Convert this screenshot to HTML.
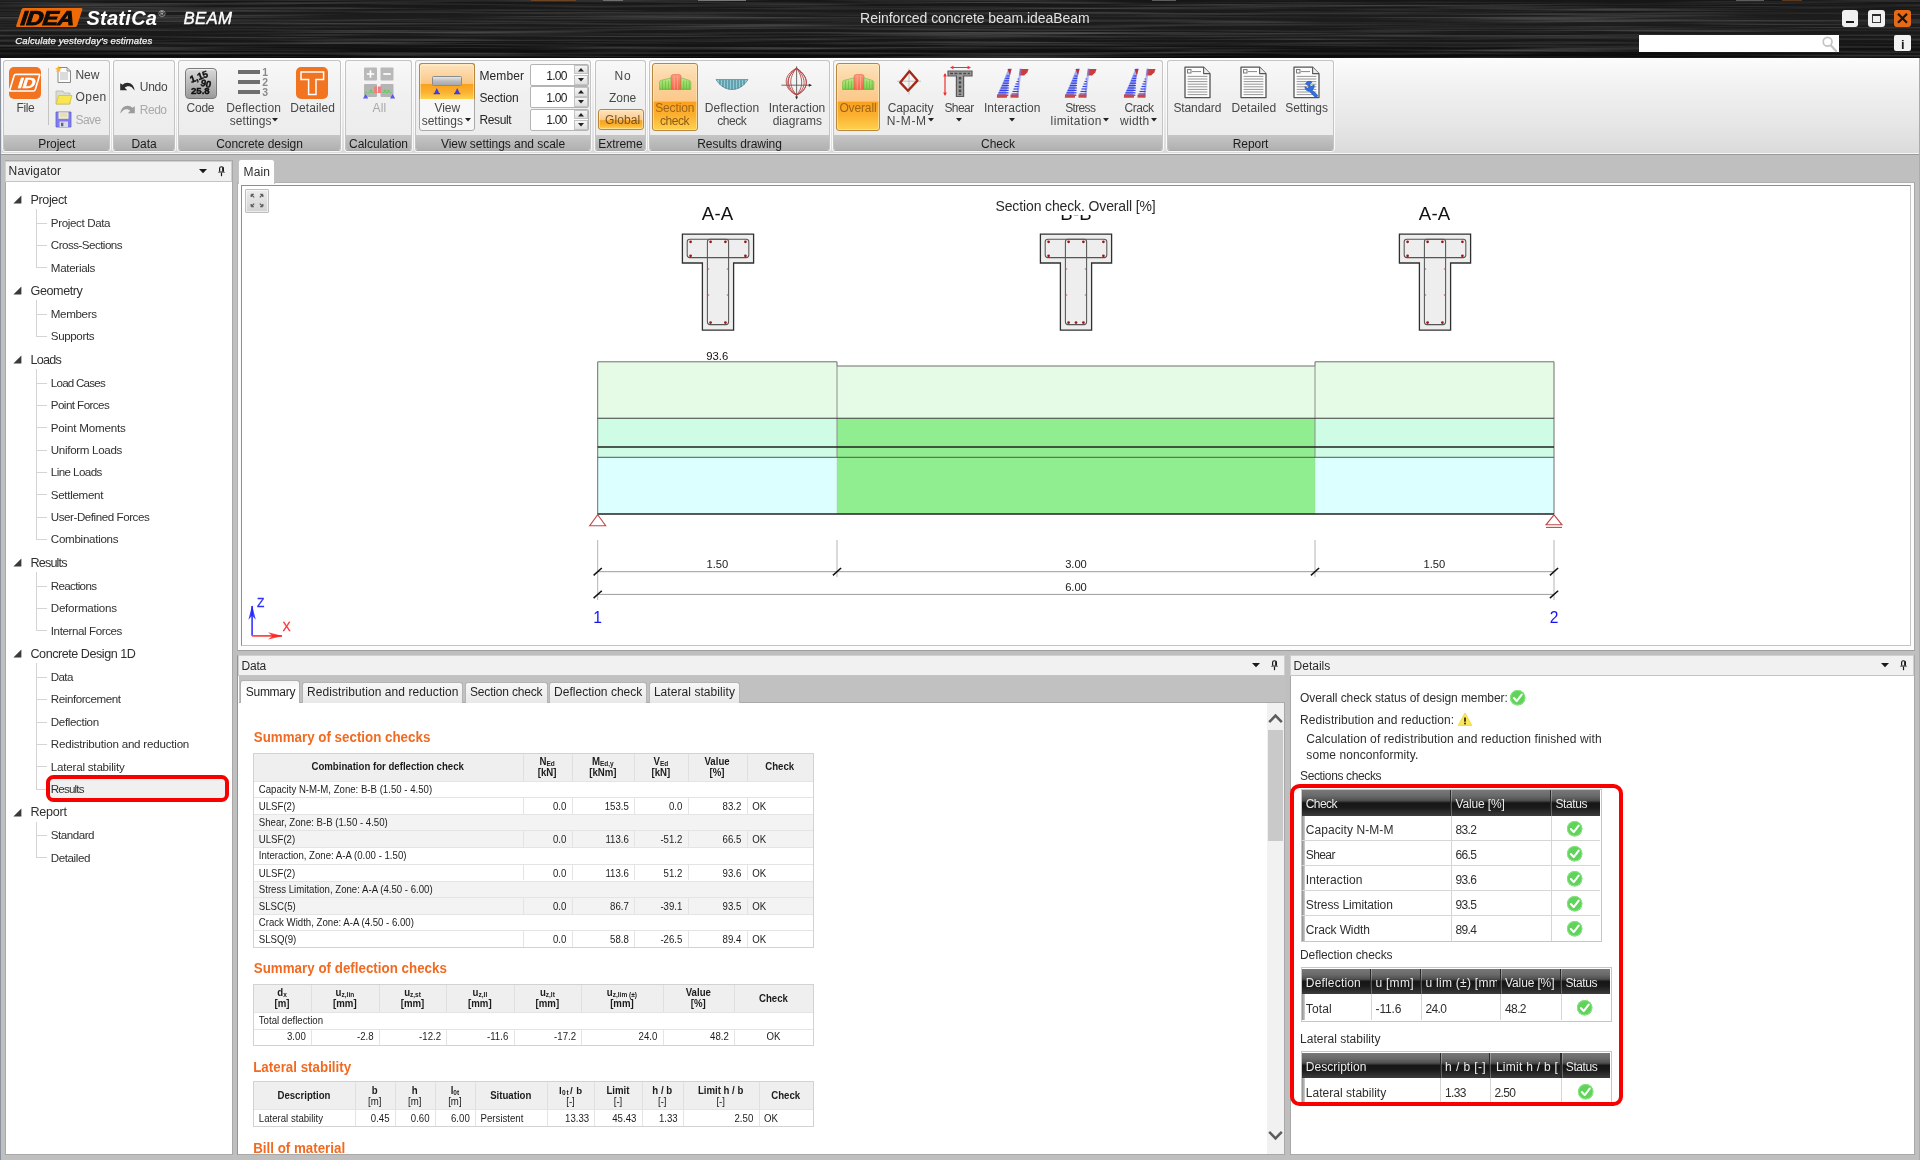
<!DOCTYPE html>
<html lang="en"><head><meta charset="utf-8"><title>IDEA StatiCa BEAM - Reinforced concrete beam.ideaBeam</title>
<style>
html,body{margin:0;padding:0;}
body{width:1920px;height:1160px;overflow:hidden;background:#bfbfbf;font-family:"Liberation Sans",sans-serif;}
#app{position:relative;width:1920px;height:1160px;overflow:hidden;will-change:transform;}
.b{position:absolute;box-sizing:border-box;}
.t{position:absolute;white-space:nowrap;font-family:"Liberation Sans",sans-serif;}
.titlebar{background:#121212;}
.streaks{background:
 repeating-linear-gradient(180deg, rgba(255,255,255,0) 0px, rgba(255,255,255,.07) 1px, rgba(255,255,255,0) 2px, rgba(0,0,0,.25) 3.5px, rgba(255,255,255,0) 5px),
 repeating-linear-gradient(180deg, rgba(255,255,255,0) 0px, rgba(255,255,255,.06) 3px, rgba(0,0,0,.3) 7px, rgba(255,255,255,.05) 9px, rgba(255,255,255,0) 11px),
 linear-gradient(180deg,#202020,#1a1a1a 50%,#101010);}
.ribbon{background:linear-gradient(180deg,#fcfcfc 0%,#f1f1f1 30%,#e6e6e6 70%,#dadada 100%);}
.grp{border:1px solid #c4c4c4;border-bottom-color:#a8a8a8;border-radius:3px;background:linear-gradient(180deg,#f8f8f8 0%,#f0f0f0 40%,#ebebeb 100%);box-shadow:0 0 0 1px rgba(255,255,255,.8);}
.grplab{background:linear-gradient(180deg,#c6c6c6,#b0b0b0);border-radius:0 0 2px 2px;}

</style></head>
<body>
<div id="app">
<div class="b titlebar" style="left:0px;top:0px;width:1920px;height:58px;"></div>
<svg class="b" style="left:0;top:0" width="1920" height="58" viewBox="0 0 1920 58"><defs><filter id="brush" x="0" y="0" width="100%" height="100%" color-interpolation-filters="sRGB"><feTurbulence type="fractalNoise" baseFrequency="0.0035 0.4" numOctaves="3" seed="7" result="n"/><feColorMatrix in="n" type="matrix" values="0 0 0 0 1  0 0 0 0 1  0 0 0 0 1  0.5 0 0 0 -0.21"/></filter><linearGradient id="tbg" x1="0" x2="0" y1="0" y2="1"><stop offset="0" stop-color="#161616"/><stop offset=".3" stop-color="#1d1d1d"/><stop offset=".7" stop-color="#181818"/><stop offset="1" stop-color="#0a0a0a"/></linearGradient></defs><rect width="1920" height="58" fill="url(#tbg)"/><rect width="1920" height="58" fill="#fff" filter="url(#brush)" opacity="1"/></svg>
<svg class="b" style="left:12px;top:4px;" width="76" height="26" viewBox="0 0 76 26"><g transform="skewX(-18.3)"><rect x="11.3" y="4" width="60.9" height="19" rx="1.6" fill="#ee6a08"/></g></svg>
<div class="t" style="left:19.3px;top:8px;font-size:20px;line-height:20px;font-weight:bold;color:#0c0c0c;-webkit-text-stroke:0.9px #0c0c0c;letter-spacing:-0.6px;transform:skewX(-18.3deg) scaleX(1.17);transform-origin:0 17px;">IDEA</div>
<div class="t" style="left:86.40px;top:8px;font-size:20px;line-height:20px;color:#fff;letter-spacing:0.282px;font-weight:bold;font-style:italic;">StatiCa</div>
<div class="t" style="top:9px;font-size:9.5px;line-height:9.5px;color:#dcdcdc;left:158.6px;">®</div>
<div class="t" style="left:183.40px;top:11px;font-size:16.8px;line-height:16.8px;color:#fff;letter-spacing:0.329px;font-style:italic;-webkit-text-stroke:0.35px #fff;">BEAM</div>
<div class="t" style="left:15.30px;top:36px;font-size:9.6px;line-height:9.6px;color:#f4f4f4;letter-spacing:0.077px;font-style:italic;-webkit-text-stroke:0.25px #f4f4f4;">Calculate yesterday's estimates</div>
<div class="t" style="left:860.10px;top:11px;font-size:14px;line-height:14px;color:#e2e2e2;letter-spacing:-0.048px;">Reinforced concrete beam.ideaBeam</div>
<div class="b" style="left:1841.5px;top:10.2px;width:16.8px;height:16.5px;background:#f0f0f0;border-radius:3px;"></div>
<div class="b" style="left:1846px;top:21px;width:8px;height:2px;background:#1a1a1a;"></div>
<div class="b" style="left:1868px;top:10.2px;width:16.8px;height:16.5px;background:#f0f0f0;border-radius:3px;"></div>
<div class="b" style="left:1872px;top:13.6px;width:9px;height:9.6px;border:1.5px solid #3a3a3a;border-top:2.4px solid #2a2a2a;"></div>
<div class="b" style="left:1894.2px;top:10.2px;width:16.8px;height:16.5px;background:#e46a18;border-radius:3px;"></div>
<svg class="b" style="left:1894.2px;top:10.2px;" width="17" height="17" viewBox="0 0 17 17"><path d="M4.8 4.6l7.4 7.4M12.2 4.6l-7.4 7.4" stroke="#151515" stroke-width="2.2" stroke-linecap="square"/></svg>
<div class="b" style="left:1639px;top:34.8px;width:200px;height:17.2px;background:#fff;"></div>
<svg class="b" style="left:1820px;top:35px;" width="18" height="18" viewBox="0 0 18 18"><circle cx="7.6" cy="6.8" r="4.4" fill="none" stroke="#c4c4c4" stroke-width="1.7"/><path d="M11 10.4l5 5.6" stroke="#c4c4c4" stroke-width="2.2" stroke-linecap="round"/></svg>
<div class="b" style="left:1894.2px;top:35.2px;width:16.8px;height:16.2px;background:#f2f2f2;border-radius:2px;"></div>
<div class="t" style="left:1900.90px;top:38px;font-size:13px;line-height:13px;color:#1c1c1c;letter-spacing:-0.012px;font-weight:bold;">i</div>
<div class="b" style="left:531px;top:0px;width:45px;height:1px;background:#7a4a22;opacity:.8;"></div>
<div class="b" style="left:603px;top:0px;width:20px;height:1px;background:#8a8a8a;opacity:.7;"></div>
<div class="b" style="left:698px;top:0px;width:48px;height:1px;background:#9a9a9a;opacity:.7;"></div>
<div class="b" style="left:1152px;top:0px;width:24px;height:1px;background:#8a8a8a;opacity:.6;"></div>
<div class="b" style="left:1736px;top:0px;width:28px;height:1px;background:#8a8a8a;opacity:.6;"></div>
<div class="b" style="left:1782px;top:0px;width:20px;height:1px;background:#8a5020;opacity:.6;"></div>
<div class="b ribbon" style="left:0px;top:58px;width:1920px;height:96px;"></div>
<div class="b" style="left:0px;top:152.6px;width:1920px;height:1.4px;background:#f6f6f6;"></div>
<div class="b" style="left:0px;top:154px;width:1920px;height:1.2px;background:#9a9a9a;"></div>
<div class="b grp" style="left:3.4px;top:60px;width:106.6px;height:91px;"></div>
<div class="b grplab" style="left:4.4px;top:135px;width:104.6px;height:15px;"></div>
<div class="t" style="top:138px;font-size:12px;line-height:12px;color:#1c1c1c;letter-spacing:-0.05px;left:-243.3px;width:600px;text-align:center;">Project</div>
<div class="b grp" style="left:113px;top:60px;width:62px;height:91px;"></div>
<div class="b grplab" style="left:114px;top:135px;width:60px;height:15px;"></div>
<div class="t" style="top:138px;font-size:12px;line-height:12px;color:#1c1c1c;letter-spacing:-0.05px;left:-156.0px;width:600px;text-align:center;">Data</div>
<div class="b grp" style="left:178px;top:60px;width:163px;height:91px;"></div>
<div class="b grplab" style="left:179px;top:135px;width:161px;height:15px;"></div>
<div class="t" style="top:138px;font-size:12px;line-height:12px;color:#1c1c1c;letter-spacing:-0.05px;left:-40.5px;width:600px;text-align:center;">Concrete design</div>
<div class="b grp" style="left:345px;top:60px;width:67px;height:91px;"></div>
<div class="b grplab" style="left:346px;top:135px;width:65px;height:15px;"></div>
<div class="t" style="top:138px;font-size:12px;line-height:12px;color:#1c1c1c;letter-spacing:-0.05px;left:78.5px;width:600px;text-align:center;">Calculation</div>
<div class="b grp" style="left:415px;top:60px;width:176px;height:91px;"></div>
<div class="b grplab" style="left:416px;top:135px;width:174px;height:15px;"></div>
<div class="t" style="top:138px;font-size:12px;line-height:12px;color:#1c1c1c;letter-spacing:-0.05px;left:203.0px;width:600px;text-align:center;">View settings and scale</div>
<div class="b grp" style="left:595px;top:60px;width:51px;height:91px;"></div>
<div class="b grplab" style="left:596px;top:135px;width:49px;height:15px;"></div>
<div class="t" style="top:138px;font-size:12px;line-height:12px;color:#1c1c1c;letter-spacing:-0.05px;left:320.5px;width:600px;text-align:center;">Extreme</div>
<div class="b grp" style="left:649px;top:60px;width:181px;height:91px;"></div>
<div class="b grplab" style="left:650px;top:135px;width:179px;height:15px;"></div>
<div class="t" style="top:138px;font-size:12px;line-height:12px;color:#1c1c1c;letter-spacing:-0.05px;left:439.5px;width:600px;text-align:center;">Results drawing</div>
<div class="b grp" style="left:833px;top:60px;width:330px;height:91px;"></div>
<div class="b grplab" style="left:834px;top:135px;width:328px;height:15px;"></div>
<div class="t" style="top:138px;font-size:12px;line-height:12px;color:#1c1c1c;letter-spacing:-0.05px;left:698.0px;width:600px;text-align:center;">Check</div>
<div class="b grp" style="left:1167px;top:60px;width:167px;height:91px;"></div>
<div class="b grplab" style="left:1168px;top:135px;width:165px;height:15px;"></div>
<div class="t" style="top:138px;font-size:12px;line-height:12px;color:#1c1c1c;letter-spacing:-0.05px;left:950.5px;width:600px;text-align:center;">Report</div>
<div class="b" style="left:9px;top:66.5px;width:32px;height:32px;background:#f27320;border-radius:5px;"></div>
<svg class="b" style="left:9px;top:66.5px;" width="32" height="32" viewBox="0 0 32 32"><g transform="skewX(-17)"><rect x="7.8" y="7.4" width="25.4" height="16.6" rx="1.2" fill="none" stroke="#fff" stroke-width="1.7"/></g></svg>
<div class="t" style="left:16.6px;top:76px;font-size:14.6px;line-height:14.6px;font-weight:bold;color:#fff;-webkit-text-stroke:0.5px #fff;letter-spacing:-0.3px;transform:skewX(-17deg) scaleX(1.2);transform-origin:0 12px;">ID</div>
<div class="t" style="left:16.50px;top:102px;font-size:12px;line-height:12px;color:#474747;letter-spacing:-0.379px;">File</div>
<div class="b" style="left:48px;top:68px;width:1px;height:57px;background:#c4c4c4;"></div>
<svg class="b" style="left:55px;top:65px;" width="18" height="19" viewBox="0 0 18 19"><path d="M3 2.5h9l3.5 3.5v11.5h-12.5z" fill="#fcfcfc" stroke="#8a8a8a" stroke-width="1"/><path d="M12 2.5v3.5h3.5" fill="none" stroke="#8a8a8a" stroke-width=".9"/><path d="M5 8h8M5 10h8M5 12h8M5 14h8" stroke="#b4b4b4" stroke-width=".9"/><path d="M3.4 0.6l1 2.3 2.4.4-1.9 1.5.6 2.4-2.1-1.3-2.1 1.3.6-2.4-1.9-1.5 2.4-.4z" fill="#f8b838"/></svg>
<div class="t" style="left:75.60px;top:69px;font-size:12px;line-height:12px;color:#474747;letter-spacing:-0.153px;">New</div>
<svg class="b" style="left:55px;top:89px;" width="18" height="17" viewBox="0 0 18 17"><path d="M1 2h7l1 2h6v11h-14z" fill="#dcdcd2" stroke="#b8b8ae" stroke-width=".8"/><path d="M3.5 6.5h13.5l-2.6 8.5h-13.2z" fill="#f8e652" stroke="#d8c030" stroke-width=".8"/></svg>
<div class="t" style="left:75.60px;top:91px;font-size:12px;line-height:12px;color:#474747;letter-spacing:0.415px;">Open</div>
<svg class="b" style="left:55px;top:111px;opacity:.85;" width="17" height="17" viewBox="0 0 17 17"><path d="M1 1h15v15h-15z" fill="#6a6af0" stroke="#4a4ad0" stroke-width=".8"/><path d="M3.5 1.2h10v6.6h-10z" fill="#f2ecc0"/><path d="M5 3h7M5 5h7" stroke="#cfc890" stroke-width=".8"/><path d="M4.5 10.5h8.5v5.5h-8.5z" fill="#d8d8e4"/><path d="M6 11.8h2.4v3.4h-2.4z" fill="#4a4a7a"/></svg>
<div class="t" style="left:75.60px;top:114px;font-size:12px;line-height:12px;color:#a9a9a9;letter-spacing:-0.617px;">Save</div>
<svg class="b" style="left:119px;top:81px;" width="17" height="11" viewBox="0 0 17 11"><path d="M1.2 2.2v7h7l-2.4-2.4c1.8-1.8 5.4-2.2 8 .6l1.8 2c-.4-4.6-3.4-7.6-7.2-7.6-2 0-3.6.8-4.8 2z" fill="#2c2c2c"/></svg>
<div class="t" style="left:139.80px;top:81px;font-size:12px;line-height:12px;color:#474747;letter-spacing:-0.296px;">Undo</div>
<svg class="b" style="left:119px;top:104px;" width="17" height="11" viewBox="0 0 17 11"><path d="M15.8 2.2v7h-7l2.4-2.4c-1.8-1.8-5.4-2.2-8 .6l-1.8 2c.4-4.6 3.4-7.6 7.2-7.6 2 0 3.6.8 4.8 2z" fill="#9c9c9c"/></svg>
<div class="t" style="left:139.80px;top:104px;font-size:12px;line-height:12px;color:#a9a9a9;letter-spacing:-0.496px;">Redo</div>
<div class="b" style="left:184.5px;top:67.5px;width:32px;height:31px;background:linear-gradient(180deg,#d8d8d8,#9a9a9a);border:1.5px solid #7a7a7a;border-radius:4px;box-shadow:inset 0 1px 1px rgba(255,255,255,.7);"></div>
<div class="t" style="top:72px;font-size:9.6px;line-height:9.6px;color:#111;font-weight:bold;left:-100.80000000000001px;width:600px;text-align:center;transform:rotate(-20deg);-webkit-text-stroke:0.4px #111;">1,15</div>
<div class="t" style="top:79px;font-size:9.6px;line-height:9.6px;color:#111;font-weight:bold;left:-93.6px;width:600px;text-align:center;transform:rotate(16deg);-webkit-text-stroke:0.4px #111;">90</div>
<div class="t" style="top:86px;font-size:9.6px;line-height:9.6px;color:#111;font-weight:bold;left:-99.69999999999999px;width:600px;text-align:center;-webkit-text-stroke:0.4px #111;">25.8</div>
<div class="t" style="left:186.50px;top:102px;font-size:12px;line-height:12px;color:#474747;letter-spacing:-0.229px;">Code</div>
<div class="b" style="left:238px;top:70px;width:22px;height:4.2px;background:#6e6e6e;"></div>
<div class="t" style="top:68px;font-size:10.4px;line-height:10.4px;color:#8a8a8a;font-weight:bold;left:262.2px;">1</div>
<div class="b" style="left:238px;top:80px;width:22px;height:4.2px;background:#6e6e6e;"></div>
<div class="t" style="top:78px;font-size:10.4px;line-height:10.4px;color:#8a8a8a;font-weight:bold;left:262.2px;">2</div>
<div class="b" style="left:238px;top:90px;width:22px;height:4.2px;background:#6e6e6e;"></div>
<div class="t" style="top:88px;font-size:10.4px;line-height:10.4px;color:#8a8a8a;font-weight:bold;left:262.2px;">3</div>
<div class="t" style="left:226.30px;top:102px;font-size:12px;line-height:12px;color:#474747;letter-spacing:0.138px;">Deflection</div>
<div class="t" style="left:229.80px;top:115px;font-size:12px;line-height:12px;color:#474747;letter-spacing:0.035px;">settings</div>
<svg class="b" style="left:272px;top:117.5px;" width="6" height="4" viewBox="0 0 6 4"><path d="M0 0h6l-3 3.4z" fill="#222"/></svg>
<div class="b" style="left:296px;top:66.5px;width:32.4px;height:32px;background:#f27320;border-radius:5px;"></div>
<svg class="b" style="left:296px;top:66.5px;" width="33" height="32" viewBox="0 0 33 32"><path d="M5 5h22.6v7.4h-7.6v15h-7.4v-15h-7.6z" fill="#f27320" stroke="#fff" stroke-width="1.5" stroke-linejoin="miter"/></svg>
<div class="t" style="left:290.20px;top:102px;font-size:12px;line-height:12px;color:#474747;letter-spacing:0.110px;">Detailed</div>
<svg class="b" style="left:363px;top:67px;" width="33" height="33" viewBox="0 0 33 33"><rect x="1" y="0.5" width="13" height="13" rx="1" fill="#b9b9b9"/><path d="M3.8 7h7.4M7.5 3.3v7.4" stroke="#fff" stroke-width="1.7"/><rect x="17.5" y="0.5" width="13" height="13" rx="1" fill="#b9b9b9"/><path d="M20.3 7h7.4" stroke="#fff" stroke-width="1.7"/><rect x="1" y="17" width="13" height="13" rx="1" fill="#b4b4b4"/><rect x="17.5" y="17" width="13" height="13" rx="1" fill="#b4b4b4"/><path d="M2 25.5h28" stroke="#6c6" stroke-width="1.2" stroke-dasharray="2 1.5"/><rect x="11" y="19.5" width="3.2" height="6.5" fill="#f08080"/><rect x="15" y="19.5" width="3.2" height="6.5" fill="#f08080"/><circle cx="8" cy="24" r="1.4" fill="#6c6"/><circle cx="22" cy="24" r="1.4" fill="#6c6"/><circle cx="25.5" cy="24" r="1.2" fill="#6c6"/><path d="M0 31.5l2.6-4.4 2.6 4.4zM27 31.5l2.6-4.4 2.6 4.4z" fill="#5a5af0"/></svg>
<div class="t" style="left:372.50px;top:102px;font-size:12px;line-height:12px;color:#a9a9a9;letter-spacing:0.132px;">All</div>
<div class="b" style="left:418.5px;top:63.2px;width:56.5px;height:67.8px;background:#f7f7f7;border:1px solid #a9a9a9;border-radius:3px;"></div>
<div class="b" style="left:418.5px;top:63.2px;width:56.5px;height:35.39999999999999px;background:linear-gradient(180deg,#fde3bd 0%,#fcd29c 35%,#fbc684 56%,#f9a11e 58%,#fbb030 80%,#fed24e 100%);border:1px solid #b9873c;border-bottom:none;border-radius:3px 3px 0 0;box-shadow:inset 0 1px 0 1px rgba(255,240,200,.55);"></div>
<div class="b" style="left:431.5px;top:76px;width:30.5px;height:9.6px;background:linear-gradient(180deg,#e6e6e6,#bdbdbd 50%,#a8a8a8);border:1px solid #8c8c8c;border-radius:1.5px;"></div>
<svg class="b" style="left:431px;top:86px;" width="32" height="9" viewBox="0 0 32 9"><path d="M3.2 7.5l2.6-5.5 2.6 5.5zM23.6 7.5l2.6-5.5 2.6 5.5z" fill="#3c3ce0"/><path d="M2.6 7.6h6.4M23 7.6h6.4" stroke="#3c3ce0" stroke-width="1.2"/></svg>
<div class="t" style="left:434.50px;top:102px;font-size:12px;line-height:12px;color:#474747;letter-spacing:-0.065px;">View</div>
<div class="t" style="left:421.70px;top:115px;font-size:12px;line-height:12px;color:#474747;letter-spacing:-0.022px;">settings</div>
<svg class="b" style="left:464.5px;top:117.5px;" width="6" height="4" viewBox="0 0 6 4"><path d="M0 0h6l-3 3.4z" fill="#222"/></svg>
<div class="t" style="left:479.50px;top:70px;font-size:12px;line-height:12px;color:#262626;letter-spacing:0.078px;">Member</div>
<div class="b" style="left:529.5px;top:63.6px;width:59px;height:22px;background:#fff;border:1px solid #b4b4b4;border-radius:2px;"></div>
<div class="b" style="left:574px;top:64.6px;width:13.5px;height:9.8px;background:linear-gradient(180deg,#f6f6f6,#dedede);border:1px solid #c2c2c2;"></div>
<div class="b" style="left:574px;top:74.8px;width:13.5px;height:9.8px;background:linear-gradient(180deg,#f6f6f6,#dedede);border:1px solid #c2c2c2;"></div>
<svg class="b" style="left:578px;top:67.8px;" width="6" height="4" viewBox="0 0 6 4"><path d="M0 3.4h6l-3-3.4z" fill="#222"/></svg>
<svg class="b" style="left:578px;top:77.8px;" width="6" height="4" viewBox="0 0 6 4"><path d="M0 0h6l-3 3.4z" fill="#222"/></svg>
<div class="t" style="left:546.20px;top:70px;font-size:12px;line-height:12px;color:#1a1a1a;letter-spacing:-0.719px;">1.00</div>
<div class="t" style="left:479.50px;top:92px;font-size:12px;line-height:12px;color:#262626;letter-spacing:-0.138px;">Section</div>
<div class="b" style="left:529.5px;top:86.1px;width:59px;height:22px;background:#fff;border:1px solid #b4b4b4;border-radius:2px;"></div>
<div class="b" style="left:574px;top:87.1px;width:13.5px;height:9.8px;background:linear-gradient(180deg,#f6f6f6,#dedede);border:1px solid #c2c2c2;"></div>
<div class="b" style="left:574px;top:97.3px;width:13.5px;height:9.8px;background:linear-gradient(180deg,#f6f6f6,#dedede);border:1px solid #c2c2c2;"></div>
<svg class="b" style="left:578px;top:90.3px;" width="6" height="4" viewBox="0 0 6 4"><path d="M0 3.4h6l-3-3.4z" fill="#222"/></svg>
<svg class="b" style="left:578px;top:100.3px;" width="6" height="4" viewBox="0 0 6 4"><path d="M0 0h6l-3 3.4z" fill="#222"/></svg>
<div class="t" style="left:546.20px;top:92px;font-size:12px;line-height:12px;color:#1a1a1a;letter-spacing:-0.719px;">1.00</div>
<div class="t" style="left:479.50px;top:114px;font-size:12px;line-height:12px;color:#262626;letter-spacing:-0.403px;">Result</div>
<div class="b" style="left:529.5px;top:108.6px;width:59px;height:22px;background:#fff;border:1px solid #b4b4b4;border-radius:2px;"></div>
<div class="b" style="left:574px;top:109.6px;width:13.5px;height:9.8px;background:linear-gradient(180deg,#f6f6f6,#dedede);border:1px solid #c2c2c2;"></div>
<div class="b" style="left:574px;top:119.8px;width:13.5px;height:9.8px;background:linear-gradient(180deg,#f6f6f6,#dedede);border:1px solid #c2c2c2;"></div>
<svg class="b" style="left:578px;top:112.8px;" width="6" height="4" viewBox="0 0 6 4"><path d="M0 3.4h6l-3-3.4z" fill="#222"/></svg>
<svg class="b" style="left:578px;top:122.8px;" width="6" height="4" viewBox="0 0 6 4"><path d="M0 0h6l-3 3.4z" fill="#222"/></svg>
<div class="t" style="left:546.20px;top:114px;font-size:12px;line-height:12px;color:#1a1a1a;letter-spacing:-0.719px;">1.00</div>
<div class="t" style="left:614.60px;top:70px;font-size:12px;line-height:12px;color:#474747;letter-spacing:0.660px;">No</div>
<div class="t" style="left:608.90px;top:92px;font-size:12px;line-height:12px;color:#474747;letter-spacing:0.016px;">Zone</div>
<div class="b" style="left:598px;top:108.5px;width:46px;height:21.8px;background:linear-gradient(180deg,#fde3bd 0%,#fbc98a 52%,#f9a11e 56%,#fbb030 78%,#fed24e 100%);border:1px solid #b9873c;border-radius:3px;box-shadow:inset 0 0 0 1px rgba(255,240,200,.55);"></div>
<div class="t" style="left:605.10px;top:114px;font-size:12px;line-height:12px;color:#74531f;letter-spacing:0.062px;">Global</div>
<div class="b" style="left:652.3px;top:63.2px;width:45.4px;height:67.8px;background:linear-gradient(180deg,#fde3bd 0%,#fcd29c 30%,#fbc98a 56%,#f9a11e 58%,#fbb030 78%,#fed24e 100%);border:1px solid #b9873c;border-radius:3px;box-shadow:inset 0 0 0 1px rgba(255,240,200,.55);"></div>
<svg class="b" style="left:659px;top:74px;" width="33" height="17" viewBox="0 0 33 17"><defs><linearGradient id="h659g" x1="0" x2="0" y1="0" y2="1"><stop offset="0" stop-color="#b8ec88"/><stop offset="1" stop-color="#80d04c"/></linearGradient><linearGradient id="h659r" x1="0" x2="0" y1="0" y2="1"><stop offset="0" stop-color="#fe9a7c"/><stop offset="1" stop-color="#f6644a"/></linearGradient></defs><path d="M0.4 15.2V8.4q0-1.4 1.4-2L12.2 3.8V15.2z" fill="url(#h659g)" stroke="#62a83e" stroke-width=".5"/><path d="M12.2 15.2V2.6q0-1.8 1.8-2h6.2q1.8.2 1.8 2V15.2z" fill="url(#h659r)" stroke="#dc5a3c" stroke-width=".5"/><path d="M22 15.2V3.8L30.4 6.4q1.4.6 1.4 2v6.800z" fill="url(#h659g)" stroke="#62a83e" stroke-width=".5"/><path d="M3.6 15v-8.4" stroke="#5aa838" stroke-width=".7" opacity=".75"/><path d="M6.6 15v-8.4" stroke="#5aa838" stroke-width=".7" opacity=".75"/><path d="M9.4 15v-8.4" stroke="#5aa838" stroke-width=".7" opacity=".75"/><path d="M24.8 15v-8.4" stroke="#5aa838" stroke-width=".7" opacity=".75"/><path d="M27.6 15v-8.4" stroke="#5aa838" stroke-width=".7" opacity=".75"/><path d="M30.2 15v-8.4" stroke="#5aa838" stroke-width=".7" opacity=".75"/><path d="M15.2 15v-13.6" stroke="#ffb8a0" stroke-width=".8" opacity=".8"/><path d="M18.6 15v-13.6" stroke="#ffb8a0" stroke-width=".8" opacity=".8"/><path d="M0.4 15.6h31.4" stroke="#5a5a3a" stroke-width=".6" opacity=".45"/></svg>
<div class="t" style="left:655.20px;top:102px;font-size:12px;line-height:12px;color:#a06418;letter-spacing:-0.138px;">Section</div>
<div class="t" style="left:660.00px;top:115px;font-size:12px;line-height:12px;color:#8c5a14;letter-spacing:-0.437px;">check</div>
<svg class="b" style="left:715px;top:78px;" width="34" height="13" viewBox="0 0 34 13"><path d="M1 1.5h32c-3.5 6-9.5 10-16 10s-12.5-4-16-10z" fill="#8fcad6" stroke="#5a8e9a" stroke-width=".8"/><path d="M5 2v4.5M8 2v7M11 2v8.5M14 2v9.4M17 2v9.6M20 2v9.4M23 2v8.5M26 2v7M29 2v4.5" stroke="#3c7684" stroke-width="1"/></svg>
<div class="t" style="left:704.70px;top:102px;font-size:12px;line-height:12px;color:#474747;letter-spacing:0.138px;">Deflection</div>
<div class="t" style="left:717.20px;top:115px;font-size:12px;line-height:12px;color:#474747;letter-spacing:-0.437px;">check</div>
<svg class="b" style="left:780px;top:65px;" width="34" height="36" viewBox="0 0 34 36"><path d="M1.4 20.2h29M16.6 1.4v32" stroke="#5a5a5a" stroke-width=".9"/><path d="M32 20.2l-3.2-1.5v3zM16.6 34.4l-1.4-2.8h2.8z" fill="#2a2a2a"/><g fill="none" stroke="#b04040" stroke-width=".85"><path d="M16.6 3.2C24 8 27 14 26 20c-1 5-4.6 8-9.4 10C11 27.6 6.4 23 6.2 17 6 11.4 10 6.4 16.6 3.2z"/><path d="M16.6 3.2C22 8 24.6 14 24 19.4c-.6 4.6-3.4 8-7.4 10.6C12.4 27 9 22.6 8.4 17.4 8 12 11 7 16.6 3.2z"/><path d="M16.6 3.2c3.600 5 5.4 10.400 5 16-.4 4.200-2.200 7.800-5 10.800-2.800-3-5.400-7-5.800-12C10.400 13 12.600 8 16.600 3.200z"/><path d="M16.600 3.200C10 9 7 14 8 20c.8 4.400 4 7.600 8.600 10 5.600-2.600 9-6.600 9.800-11.400C27.200 13.600 23.600 8 16.600 3.200z"/></g></svg>
<div class="t" style="left:768.70px;top:102px;font-size:12px;line-height:12px;color:#474747;letter-spacing:0.057px;">Interaction</div>
<div class="t" style="left:772.70px;top:115px;font-size:12px;line-height:12px;color:#474747;letter-spacing:0.006px;">diagrams</div>
<div class="b" style="left:836.2px;top:63.2px;width:43.8px;height:67.8px;background:linear-gradient(180deg,#fde3bd 0%,#fcd29c 30%,#fbc98a 56%,#f9a11e 58%,#fbb030 78%,#fed24e 100%);border:1px solid #b9873c;border-radius:3px;box-shadow:inset 0 0 0 1px rgba(255,240,200,.55);"></div>
<svg class="b" style="left:842.2px;top:74px;" width="33" height="17" viewBox="0 0 33 17"><defs><linearGradient id="h842g" x1="0" x2="0" y1="0" y2="1"><stop offset="0" stop-color="#b8ec88"/><stop offset="1" stop-color="#80d04c"/></linearGradient><linearGradient id="h842r" x1="0" x2="0" y1="0" y2="1"><stop offset="0" stop-color="#fe9a7c"/><stop offset="1" stop-color="#f6644a"/></linearGradient></defs><path d="M0.4 15.2V8.4q0-1.4 1.4-2L12.2 3.8V15.2z" fill="url(#h842g)" stroke="#62a83e" stroke-width=".5"/><path d="M12.2 15.2V2.6q0-1.8 1.8-2h6.2q1.8.2 1.8 2V15.2z" fill="url(#h842r)" stroke="#dc5a3c" stroke-width=".5"/><path d="M22 15.2V3.8L30.4 6.4q1.4.6 1.4 2v6.800z" fill="url(#h842g)" stroke="#62a83e" stroke-width=".5"/><path d="M3.6 15v-8.4" stroke="#5aa838" stroke-width=".7" opacity=".75"/><path d="M6.6 15v-8.4" stroke="#5aa838" stroke-width=".7" opacity=".75"/><path d="M9.4 15v-8.4" stroke="#5aa838" stroke-width=".7" opacity=".75"/><path d="M24.8 15v-8.4" stroke="#5aa838" stroke-width=".7" opacity=".75"/><path d="M27.6 15v-8.4" stroke="#5aa838" stroke-width=".7" opacity=".75"/><path d="M30.2 15v-8.4" stroke="#5aa838" stroke-width=".7" opacity=".75"/><path d="M15.2 15v-13.6" stroke="#ffb8a0" stroke-width=".8" opacity=".8"/><path d="M18.6 15v-13.6" stroke="#ffb8a0" stroke-width=".8" opacity=".8"/><path d="M0.4 15.6h31.4" stroke="#5a5a3a" stroke-width=".6" opacity=".45"/></svg>
<div class="t" style="left:839.40px;top:102px;font-size:12px;line-height:12px;color:#a06418;letter-spacing:-0.135px;">Overall</div>
<svg class="b" style="left:896px;top:68px;" width="26" height="28" viewBox="0 0 26 28"><path d="M13 0.5v26M1 13.2h24" stroke="#b4b4b4" stroke-width=".8"/><path d="M13.4 3.2l8 9.4-9.4 10.2-7.8-8.4z" fill="none" stroke="#a42818" stroke-width="2.3" stroke-linejoin="round"/></svg>
<div class="t" style="left:887.80px;top:102px;font-size:12px;line-height:12px;color:#474747;letter-spacing:-0.155px;">Capacity</div>
<div class="t" style="left:886.70px;top:115px;font-size:12px;line-height:12px;color:#474747;letter-spacing:0.687px;">N-M-M</div>
<svg class="b" style="left:927.5px;top:117.5px;" width="6" height="4" viewBox="0 0 6 4"><path d="M0 0h6l-3 3.4z" fill="#222"/></svg>
<svg class="b" style="left:943px;top:65px;" width="32" height="34" viewBox="0 0 32 34"><path d="M5 6h24v5h-8.4v20.5h-7.2v-20.5h-8.4z" fill="#9a9a9a" stroke="#5a5a5a" stroke-width="1.2"/><path d="M7 8.5h20" stroke="#4a4a4a" stroke-width="1.6" stroke-dasharray="3 1.4"/><path d="M17 12v18" stroke="#4a4a4a" stroke-width="2.4" stroke-dasharray="2.6 1.6"/><path d="M8 2.5h19M2 9v21" stroke="#f03030" stroke-width="1.2"/><path d="M7 2.5l3.4-1.8v3.6zM28 2.5l-3.4-1.8v3.6zM2 8l-1.8 3.4h3.6zM2 31l-1.8-3.4h3.6z" fill="#f03030"/></svg>
<div class="t" style="left:944.40px;top:102px;font-size:12px;line-height:12px;color:#474747;letter-spacing:-0.556px;">Shear</div>
<svg class="b" style="left:955.5px;top:117.5px;" width="6" height="4" viewBox="0 0 6 4"><path d="M0 0h6l-3 3.4z" fill="#222"/></svg>
<svg class="b" style="left:996px;top:66.5px;" width="34" height="33" viewBox="0 0 34 33"><path d="M12.5 1.5l3.2 0l-6.6 29h-8.6z" fill="#5a6cf0" opacity=".55"/><path d="M10.5 9.0h3.0" stroke="#3440e8" stroke-width="1.2"/><path d="M9.3 11.4h4.0" stroke="#3440e8" stroke-width="1.2"/><path d="M8.2 13.8h5.0" stroke="#3440e8" stroke-width="1.2"/><path d="M7.1 16.2h6.0" stroke="#3440e8" stroke-width="1.2"/><path d="M5.9 18.6h7.0" stroke="#3440e8" stroke-width="1.2"/><path d="M4.8 21.0h8.0" stroke="#3440e8" stroke-width="1.2"/><path d="M3.6 23.4h9.0" stroke="#3440e8" stroke-width="1.2"/><path d="M2.5 25.8h10.0" stroke="#3440e8" stroke-width="1.2"/><path d="M1.3 28.2h11.0" stroke="#3440e8" stroke-width="1.2"/><path d="M11.5 2h4l-1.6 6.6z" fill="#c03030"/><path d="M1 27.5h10v3.2h-10z" fill="#c84848"/><path d="M24 2h8.5l-1.2 3.6-3.2 3h-5z" fill="#cc3c3c"/><path d="M23.6 1.5h2.2l-3.6 29h-2z" fill="#7c86f4" opacity=".6"/><path d="M21.5 12.0h1.5" stroke="#3440e8" stroke-width="1.2"/><path d="M20.5 14.5h2.4" stroke="#3440e8" stroke-width="1.2"/><path d="M19.5 17.0h3.3" stroke="#3440e8" stroke-width="1.2"/><path d="M18.5 19.5h4.2" stroke="#3440e8" stroke-width="1.2"/><path d="M17.5 22.0h5.1" stroke="#3440e8" stroke-width="1.2"/><path d="M16.5 24.5h6.0" stroke="#3440e8" stroke-width="1.2"/><path d="M15.5 27.0h6.9" stroke="#3440e8" stroke-width="1.2"/><path d="M14.5 27.5h8v3.2h-8z" fill="#c84848"/></svg>
<div class="t" style="left:983.90px;top:102px;font-size:12px;line-height:12px;color:#474747;letter-spacing:0.057px;">Interaction</div>
<svg class="b" style="left:1009px;top:117.5px;" width="6" height="4" viewBox="0 0 6 4"><path d="M0 0h6l-3 3.4z" fill="#222"/></svg>
<svg class="b" style="left:1063.5px;top:66.5px;" width="34" height="33" viewBox="0 0 34 33"><path d="M12.5 1.5l3.2 0l-6.6 29h-8.6z" fill="#5a6cf0" opacity=".55"/><path d="M10.5 9.0h3.0" stroke="#3440e8" stroke-width="1.2"/><path d="M9.3 11.4h4.0" stroke="#3440e8" stroke-width="1.2"/><path d="M8.2 13.8h5.0" stroke="#3440e8" stroke-width="1.2"/><path d="M7.1 16.2h6.0" stroke="#3440e8" stroke-width="1.2"/><path d="M5.9 18.6h7.0" stroke="#3440e8" stroke-width="1.2"/><path d="M4.8 21.0h8.0" stroke="#3440e8" stroke-width="1.2"/><path d="M3.6 23.4h9.0" stroke="#3440e8" stroke-width="1.2"/><path d="M2.5 25.8h10.0" stroke="#3440e8" stroke-width="1.2"/><path d="M1.3 28.2h11.0" stroke="#3440e8" stroke-width="1.2"/><path d="M11.5 2h4l-1.6 6.6z" fill="#c03030"/><path d="M1 27.5h10v3.2h-10z" fill="#c84848"/><path d="M24 2h8.5l-1.2 3.6-3.2 3h-5z" fill="#cc3c3c"/><path d="M23.6 1.5h2.2l-3.6 29h-2z" fill="#7c86f4" opacity=".6"/><path d="M21.5 12.0h1.5" stroke="#3440e8" stroke-width="1.2"/><path d="M20.5 14.5h2.4" stroke="#3440e8" stroke-width="1.2"/><path d="M19.5 17.0h3.3" stroke="#3440e8" stroke-width="1.2"/><path d="M18.5 19.5h4.2" stroke="#3440e8" stroke-width="1.2"/><path d="M17.5 22.0h5.1" stroke="#3440e8" stroke-width="1.2"/><path d="M16.5 24.5h6.0" stroke="#3440e8" stroke-width="1.2"/><path d="M15.5 27.0h6.9" stroke="#3440e8" stroke-width="1.2"/><path d="M14.5 27.5h8v3.2h-8z" fill="#c84848"/></svg>
<div class="t" style="left:1065.30px;top:102px;font-size:12px;line-height:12px;color:#474747;letter-spacing:-0.682px;">Stress</div>
<div class="t" style="left:1050.60px;top:115px;font-size:12px;line-height:12px;color:#474747;letter-spacing:0.383px;">limitation</div>
<svg class="b" style="left:1102.8px;top:117.5px;" width="6" height="4" viewBox="0 0 6 4"><path d="M0 0h6l-3 3.4z" fill="#222"/></svg>
<svg class="b" style="left:1122.8px;top:66.5px;" width="34" height="33" viewBox="0 0 34 33"><path d="M12.5 1.5l3.2 0l-6.6 29h-8.6z" fill="#5a6cf0" opacity=".55"/><path d="M10.5 9.0h3.0" stroke="#3440e8" stroke-width="1.2"/><path d="M9.3 11.4h4.0" stroke="#3440e8" stroke-width="1.2"/><path d="M8.2 13.8h5.0" stroke="#3440e8" stroke-width="1.2"/><path d="M7.1 16.2h6.0" stroke="#3440e8" stroke-width="1.2"/><path d="M5.9 18.6h7.0" stroke="#3440e8" stroke-width="1.2"/><path d="M4.8 21.0h8.0" stroke="#3440e8" stroke-width="1.2"/><path d="M3.6 23.4h9.0" stroke="#3440e8" stroke-width="1.2"/><path d="M2.5 25.8h10.0" stroke="#3440e8" stroke-width="1.2"/><path d="M1.3 28.2h11.0" stroke="#3440e8" stroke-width="1.2"/><path d="M11.5 2h4l-1.6 6.6z" fill="#c03030"/><path d="M1 27.5h10v3.2h-10z" fill="#c84848"/><path d="M24 2h8.5l-1.2 3.6-3.2 3h-5z" fill="#cc3c3c"/><path d="M23.6 1.5h2.2l-3.6 29h-2z" fill="#7c86f4" opacity=".6"/><path d="M21.5 12.0h1.5" stroke="#3440e8" stroke-width="1.2"/><path d="M20.5 14.5h2.4" stroke="#3440e8" stroke-width="1.2"/><path d="M19.5 17.0h3.3" stroke="#3440e8" stroke-width="1.2"/><path d="M18.5 19.5h4.2" stroke="#3440e8" stroke-width="1.2"/><path d="M17.5 22.0h5.1" stroke="#3440e8" stroke-width="1.2"/><path d="M16.5 24.5h6.0" stroke="#3440e8" stroke-width="1.2"/><path d="M15.5 27.0h6.9" stroke="#3440e8" stroke-width="1.2"/><path d="M14.5 27.5h8v3.2h-8z" fill="#c84848"/></svg>
<div class="t" style="left:1124.60px;top:102px;font-size:12px;line-height:12px;color:#474747;letter-spacing:-0.484px;">Crack</div>
<div class="t" style="left:1120.00px;top:115px;font-size:12px;line-height:12px;color:#474747;letter-spacing:0.296px;">width</div>
<svg class="b" style="left:1150.8px;top:117.5px;" width="6" height="4" viewBox="0 0 6 4"><path d="M0 0h6l-3 3.4z" fill="#222"/></svg>
<svg class="b" style="left:1184.3px;top:66px;" width="27" height="33" viewBox="0 0 27 33"><path d="M1 1.2h18.6l6.4 6.4v24h-25z" fill="#fdfdfd" stroke="#555" stroke-width="1.3" stroke-linejoin="round"/><path d="M19.6 1.2v6.4h6.4" fill="#ececec" stroke="#555" stroke-width="1.1" stroke-linejoin="round"/><rect x="3.6" y="3.6" width="3.4" height="3.4" fill="none" stroke="#666" stroke-width="0.9"/><path d="M8 5.6h9" stroke="#888" stroke-width="1"/><path d="M3.6 10.40h19.8" stroke="#8a8a8a" stroke-width="0.9"/><path d="M3.6 13.00h19.8" stroke="#8a8a8a" stroke-width="0.9"/><path d="M3.6 15.60h19.8" stroke="#8a8a8a" stroke-width="0.9"/><path d="M3.6 18.20h19.8" stroke="#8a8a8a" stroke-width="0.9"/><path d="M3.6 20.80h19.8" stroke="#8a8a8a" stroke-width="0.9"/><path d="M3.6 23.40h19.8" stroke="#8a8a8a" stroke-width="0.9"/><path d="M3.6 26.00h19.8" stroke="#8a8a8a" stroke-width="0.9"/><path d="M3.6 28.60h19.8" stroke="#8a8a8a" stroke-width="0.9"/></svg>
<div class="t" style="left:1173.50px;top:102px;font-size:12px;line-height:12px;color:#474747;letter-spacing:-0.129px;">Standard</div>
<svg class="b" style="left:1240.4px;top:66px;" width="27" height="33" viewBox="0 0 27 33"><path d="M1 1.2h18.6l6.4 6.4v24h-25z" fill="#fdfdfd" stroke="#555" stroke-width="1.3" stroke-linejoin="round"/><path d="M19.6 1.2v6.4h6.4" fill="#ececec" stroke="#555" stroke-width="1.1" stroke-linejoin="round"/><rect x="3.6" y="3.6" width="3.4" height="3.4" fill="none" stroke="#666" stroke-width="0.9"/><path d="M8 5.6h9" stroke="#888" stroke-width="1"/><path d="M3.6 10.40h19.8" stroke="#8a8a8a" stroke-width="0.9"/><path d="M3.6 13.00h19.8" stroke="#8a8a8a" stroke-width="0.9"/><path d="M3.6 15.60h19.8" stroke="#8a8a8a" stroke-width="0.9"/><path d="M3.6 18.20h19.8" stroke="#8a8a8a" stroke-width="0.9"/><path d="M3.6 20.80h19.8" stroke="#8a8a8a" stroke-width="0.9"/><path d="M3.6 23.40h19.8" stroke="#8a8a8a" stroke-width="0.9"/><path d="M3.6 26.00h19.8" stroke="#8a8a8a" stroke-width="0.9"/><path d="M3.6 28.60h19.8" stroke="#8a8a8a" stroke-width="0.9"/></svg>
<div class="t" style="left:1231.40px;top:102px;font-size:12px;line-height:12px;color:#474747;letter-spacing:0.110px;">Detailed</div>
<svg class="b" style="left:1293px;top:66px;" width="27" height="33" viewBox="0 0 27 33"><path d="M1 1.2h18.6l6.4 6.4v24h-25z" fill="#fdfdfd" stroke="#555" stroke-width="1.3" stroke-linejoin="round"/><path d="M19.6 1.2v6.4h6.4" fill="#ececec" stroke="#555" stroke-width="1.1" stroke-linejoin="round"/><rect x="3.6" y="3.6" width="3.4" height="3.4" fill="none" stroke="#666" stroke-width="0.9"/><path d="M8 5.6h9" stroke="#888" stroke-width="1"/><path d="M3.6 10.40h19.8" stroke="#8a8a8a" stroke-width="0.9"/><path d="M3.6 13.00h19.8" stroke="#8a8a8a" stroke-width="0.9"/><path d="M3.6 15.60h19.8" stroke="#8a8a8a" stroke-width="0.9"/><path d="M3.6 18.20h19.8" stroke="#8a8a8a" stroke-width="0.9"/><path d="M3.6 20.80h19.8" stroke="#8a8a8a" stroke-width="0.9"/><path d="M3.6 23.40h19.8" stroke="#8a8a8a" stroke-width="0.9"/><path d="M3.6 26.00h19.8" stroke="#8a8a8a" stroke-width="0.9"/><path d="M3.6 28.60h19.8" stroke="#8a8a8a" stroke-width="0.9"/><path d="M12.5 17.5c2-2.6 5-2.6 6.6-1.4l-2.6 2.4 1.4 2 3.2-1.6c0.6 2.4-0.6 4.2-2.2 5l5.6 5.2c0.8 1-1.4 3-2.6 2l-5.4-5.8c-2.4 0-4.6-1.6-4.6-4.6l2.6 1.6 1.8-1.6z" fill="#2f6fe0" stroke="#1b4fb8" stroke-width="0.6"/></svg>
<div class="t" style="left:1285.30px;top:102px;font-size:12px;line-height:12px;color:#474747;letter-spacing:-0.109px;">Settings</div>
<div class="b" style="left:4.5px;top:160.3px;width:228px;height:994.8px;background:#fff;border:1px solid #a8a8a8;"></div>
<div class="b" style="left:0px;top:58px;width:1.1px;height:1102px;background:#8a919c;"></div>
<div class="b" style="left:1918.9px;top:58px;width:1.1px;height:1102px;background:#a4adba;"></div>
<div class="b" style="left:5px;top:160.8px;width:227px;height:21px;background:#f1f1f1;border:1px solid #cfcfcf;border-bottom:1px solid #c4c4c4;"></div>
<div class="t" style="left:8.60px;top:165px;font-size:12px;line-height:12px;color:#2a2a2a;letter-spacing:0.130px;">Navigator</div>
<svg class="b" style="left:198.9px;top:169.0px;" width="8" height="5" viewBox="0 0 8 5"><path d="M0 0h8l-4 4.2z" fill="#1a1a1a"/></svg>
<svg class="b" style="left:216.9px;top:166.20000000000002px;" width="9" height="11" viewBox="0 0 9 11"><path d="M2.6 5.6v-3.2c0-2.2 3.8-2.2 3.8 0v3.2" fill="none" stroke="#1a1a1a" stroke-width="1.2"/><path d="M5.9 1.6v4" stroke="#1a1a1a" stroke-width="1.5"/><path d="M0.8 6.6l1.2-1.2h5l1.2 1.2z" fill="#1a1a1a"/><path d="M4.5 6.6v3.6" stroke="#1a1a1a" stroke-width="1.2"/></svg>
<svg class="b" style="left:13px;top:195.1px;" width="9" height="9" viewBox="0 0 9 9"><path d="M8.4 0.4v8h-8z" fill="#3a3a3a"/></svg>
<div class="t" style="left:30.50px;top:194px;font-size:12.6px;line-height:12.6px;color:#303030;letter-spacing:-0.403px;">Project</div>
<div class="t" style="left:50.80px;top:217px;font-size:11.6px;line-height:11.6px;color:#303030;letter-spacing:-0.366px;">Project Data</div>
<div class="t" style="left:50.80px;top:239px;font-size:11.6px;line-height:11.6px;color:#303030;letter-spacing:-0.527px;">Cross-Sections</div>
<div class="t" style="left:50.80px;top:262px;font-size:11.6px;line-height:11.6px;color:#303030;letter-spacing:-0.307px;">Materials</div>
<div class="b" style="left:36px;top:209.0px;width:1px;height:58.52000000000004px;background:#d4d4d4;"></div>
<div class="b" style="left:36px;top:222.5px;width:10.5px;height:1px;background:#d4d4d4;"></div>
<div class="b" style="left:36px;top:244.86px;width:10.5px;height:1px;background:#d4d4d4;"></div>
<div class="b" style="left:36px;top:267.22px;width:10.5px;height:1px;background:#d4d4d4;"></div>
<svg class="b" style="left:13px;top:286.32000000000005px;" width="9" height="9" viewBox="0 0 9 9"><path d="M8.4 0.4v8h-8z" fill="#3a3a3a"/></svg>
<div class="t" style="left:30.50px;top:285px;font-size:12.6px;line-height:12.6px;color:#303030;letter-spacing:-0.417px;">Geometry</div>
<div class="t" style="left:50.80px;top:308px;font-size:11.6px;line-height:11.6px;color:#303030;letter-spacing:-0.357px;">Members</div>
<div class="t" style="left:50.80px;top:330px;font-size:11.6px;line-height:11.6px;color:#303030;letter-spacing:-0.376px;">Supports</div>
<div class="b" style="left:36px;top:300.22px;width:1px;height:36.160000000000025px;background:#d4d4d4;"></div>
<div class="b" style="left:36px;top:313.72px;width:10.5px;height:1px;background:#d4d4d4;"></div>
<div class="b" style="left:36px;top:336.08000000000004px;width:10.5px;height:1px;background:#d4d4d4;"></div>
<svg class="b" style="left:13px;top:355.18000000000006px;" width="9" height="9" viewBox="0 0 9 9"><path d="M8.4 0.4v8h-8z" fill="#3a3a3a"/></svg>
<div class="t" style="left:30.50px;top:354px;font-size:12.6px;line-height:12.6px;color:#303030;letter-spacing:-0.783px;">Loads</div>
<div class="t" style="left:50.80px;top:377px;font-size:11.6px;line-height:11.6px;color:#303030;letter-spacing:-0.768px;">Load Cases</div>
<div class="t" style="left:50.80px;top:399px;font-size:11.6px;line-height:11.6px;color:#303030;letter-spacing:-0.556px;">Point Forces</div>
<div class="t" style="left:50.80px;top:422px;font-size:11.6px;line-height:11.6px;color:#303030;letter-spacing:-0.197px;">Point Moments</div>
<div class="t" style="left:50.80px;top:444px;font-size:11.6px;line-height:11.6px;color:#303030;letter-spacing:-0.320px;">Uniform Loads</div>
<div class="t" style="left:50.80px;top:466px;font-size:11.6px;line-height:11.6px;color:#303030;letter-spacing:-0.573px;">Line Loads</div>
<div class="t" style="left:50.80px;top:489px;font-size:11.6px;line-height:11.6px;color:#303030;letter-spacing:-0.317px;">Settlement</div>
<div class="t" style="left:50.80px;top:511px;font-size:11.6px;line-height:11.6px;color:#303030;letter-spacing:-0.445px;">User-Defined Forces</div>
<div class="t" style="left:50.80px;top:533px;font-size:11.6px;line-height:11.6px;color:#303030;letter-spacing:-0.284px;">Combinations</div>
<div class="b" style="left:36px;top:369.08000000000004px;width:1px;height:170.32000000000005px;background:#d4d4d4;"></div>
<div class="b" style="left:36px;top:382.58000000000004px;width:10.5px;height:1px;background:#d4d4d4;"></div>
<div class="b" style="left:36px;top:404.94000000000005px;width:10.5px;height:1px;background:#d4d4d4;"></div>
<div class="b" style="left:36px;top:427.30000000000007px;width:10.5px;height:1px;background:#d4d4d4;"></div>
<div class="b" style="left:36px;top:449.6600000000001px;width:10.5px;height:1px;background:#d4d4d4;"></div>
<div class="b" style="left:36px;top:472.0200000000001px;width:10.5px;height:1px;background:#d4d4d4;"></div>
<div class="b" style="left:36px;top:494.3800000000001px;width:10.5px;height:1px;background:#d4d4d4;"></div>
<div class="b" style="left:36px;top:516.7400000000001px;width:10.5px;height:1px;background:#d4d4d4;"></div>
<div class="b" style="left:36px;top:539.1000000000001px;width:10.5px;height:1px;background:#d4d4d4;"></div>
<svg class="b" style="left:13px;top:558.2000000000002px;" width="9" height="9" viewBox="0 0 9 9"><path d="M8.4 0.4v8h-8z" fill="#3a3a3a"/></svg>
<div class="t" style="left:30.50px;top:557px;font-size:12.6px;line-height:12.6px;color:#303030;letter-spacing:-0.836px;">Results</div>
<div class="t" style="left:50.80px;top:580px;font-size:11.6px;line-height:11.6px;color:#303030;letter-spacing:-0.673px;">Reactions</div>
<div class="t" style="left:50.80px;top:602px;font-size:11.6px;line-height:11.6px;color:#303030;letter-spacing:-0.253px;">Deformations</div>
<div class="t" style="left:50.80px;top:625px;font-size:11.6px;line-height:11.6px;color:#303030;letter-spacing:-0.412px;">Internal Forces</div>
<div class="b" style="left:36px;top:572.1000000000001px;width:1px;height:58.51999999999998px;background:#d4d4d4;"></div>
<div class="b" style="left:36px;top:585.6000000000001px;width:10.5px;height:1px;background:#d4d4d4;"></div>
<div class="b" style="left:36px;top:607.9600000000002px;width:10.5px;height:1px;background:#d4d4d4;"></div>
<div class="b" style="left:36px;top:630.3200000000002px;width:10.5px;height:1px;background:#d4d4d4;"></div>
<svg class="b" style="left:13px;top:649.4200000000002px;" width="9" height="9" viewBox="0 0 9 9"><path d="M8.4 0.4v8h-8z" fill="#3a3a3a"/></svg>
<div class="t" style="left:30.50px;top:648px;font-size:12.6px;line-height:12.6px;color:#303030;letter-spacing:-0.474px;">Concrete Design 1D</div>
<div class="t" style="left:50.80px;top:671px;font-size:11.6px;line-height:11.6px;color:#303030;letter-spacing:-0.634px;">Data</div>
<div class="t" style="left:50.80px;top:693px;font-size:11.6px;line-height:11.6px;color:#303030;letter-spacing:-0.436px;">Reinforcement</div>
<div class="t" style="left:50.80px;top:716px;font-size:11.6px;line-height:11.6px;color:#303030;letter-spacing:-0.354px;">Deflection</div>
<div class="t" style="left:50.80px;top:738px;font-size:11.6px;line-height:11.6px;color:#303030;letter-spacing:-0.217px;">Redistribution and reduction</div>
<div class="t" style="left:50.80px;top:761px;font-size:11.6px;line-height:11.6px;color:#303030;letter-spacing:-0.211px;">Lateral stability</div>
<div class="b" style="left:47.5px;top:779.1200000000002px;width:180.5px;height:20px;background:#f0f0f0;"></div>
<div class="t" style="left:50.80px;top:783px;font-size:11.6px;line-height:11.6px;color:#303030;letter-spacing:-0.813px;">Results</div>
<div class="b" style="left:36px;top:663.3200000000002px;width:1px;height:125.60000000000002px;background:#d4d4d4;"></div>
<div class="b" style="left:36px;top:676.8200000000002px;width:10.5px;height:1px;background:#d4d4d4;"></div>
<div class="b" style="left:36px;top:699.1800000000002px;width:10.5px;height:1px;background:#d4d4d4;"></div>
<div class="b" style="left:36px;top:721.5400000000002px;width:10.5px;height:1px;background:#d4d4d4;"></div>
<div class="b" style="left:36px;top:743.9000000000002px;width:10.5px;height:1px;background:#d4d4d4;"></div>
<div class="b" style="left:36px;top:766.2600000000002px;width:10.5px;height:1px;background:#d4d4d4;"></div>
<div class="b" style="left:36px;top:788.6200000000002px;width:10.5px;height:1px;background:#d4d4d4;"></div>
<svg class="b" style="left:13px;top:807.7200000000003px;" width="9" height="9" viewBox="0 0 9 9"><path d="M8.4 0.4v8h-8z" fill="#3a3a3a"/></svg>
<div class="t" style="left:30.50px;top:806px;font-size:12.6px;line-height:12.6px;color:#303030;letter-spacing:-0.284px;">Report</div>
<div class="t" style="left:50.80px;top:829px;font-size:11.6px;line-height:11.6px;color:#303030;letter-spacing:-0.469px;">Standard</div>
<div class="t" style="left:50.80px;top:852px;font-size:11.6px;line-height:11.6px;color:#303030;letter-spacing:-0.423px;">Detailed</div>
<div class="b" style="left:36px;top:821.6200000000002px;width:1px;height:36.15999999999997px;background:#d4d4d4;"></div>
<div class="b" style="left:36px;top:835.1200000000002px;width:10.5px;height:1px;background:#d4d4d4;"></div>
<div class="b" style="left:36px;top:857.4800000000002px;width:10.5px;height:1px;background:#d4d4d4;"></div>
<div class="b" style="left:46.3px;top:775.2px;width:182.6px;height:26.6px;border:4px solid #f80000;border-radius:7.5px;"></div>
<div class="b" style="left:237px;top:181.6px;width:1678px;height:469.4px;background:#fcfcfc;border:1px solid #b0b0b0;border-bottom:1.4px solid #9e9e9e;border-right:1.2px solid #a6a6a6;"></div>
<div class="b" style="left:240.8px;top:185px;width:1670.3px;height:461.2px;background:#fff;border:1px solid #c4c4c4;border-left-color:#8e8e8e;border-top-color:#8e8e8e;"></div>
<div class="b" style="left:237.6px;top:158.6px;width:37.4px;height:25.6px;background:linear-gradient(180deg,#fff,#fcfcfc);border:1px solid #c2c2c2;border-bottom:none;border-radius:3px 3px 0 0;"></div>
<div class="t" style="left:243.60px;top:166px;font-size:12px;line-height:12px;color:#303030;letter-spacing:0.130px;">Main</div>
<div class="b" style="left:245px;top:189px;width:24px;height:24px;background:linear-gradient(180deg,#ececec,#d2d2d2);border:1px solid #bdbdbd;border-radius:1px;box-shadow:inset 0 0 0 1px rgba(255,255,255,.6);"></div>
<svg class="b" style="left:245px;top:189px;" width="24" height="24" viewBox="0 0 24 24"><g stroke="#5a5a5a" stroke-width="1.3" fill="none"><path d="M6.2 5.4l3 3M6.2 5.4h2.6M6.2 5.4v2.6"/><path d="M17.8 5.4l-3 3M17.8 5.4h-2.6M17.8 5.4v2.6"/><path d="M6.2 17.6l3-3M6.2 17.6h2.6M6.2 17.6v-2.6"/><path d="M17.8 17.6l-3-3M17.8 17.6h-2.6M17.8 17.6v-2.6"/></g></svg>
<div class="t" style="left:701.80px;top:205px;font-size:18.6px;line-height:18.6px;color:#111;letter-spacing:0.196px;">A-A</div>
<div class="t" style="left:1060.30px;top:205px;font-size:18.6px;line-height:18.6px;color:#111;letter-spacing:0.196px;">B-B</div>
<div class="t" style="left:1418.80px;top:205px;font-size:18.6px;line-height:18.6px;color:#111;letter-spacing:0.196px;">A-A</div>
<div class="b" style="left:993px;top:196px;width:165px;height:19.2px;background:#fff;"></div>
<div class="t" style="left:995.50px;top:199px;font-size:14px;line-height:14px;color:#2a2a2a;letter-spacing:-0.128px;">Section check. Overall [%]</div>
<svg class="b" style="left:677.6px;top:230px;" width="80" height="104" viewBox="0 0 80 104"><path d="M4.399999999999999 4.2H75.6V33H55.6V100.2H24.4V33H4.399999999999999Z" fill="#eeeeee" stroke="#303030" stroke-width="1.3" stroke-linejoin="miter"/><rect x="9.2" y="9.2" width="61.6" height="18.4" rx="2.6" fill="none" stroke="#555" stroke-width="1.05"/><rect x="29.4" y="9.2" width="21.2" height="85.4" rx="2.6" fill="none" stroke="#555" stroke-width="1.05"/><circle cx="12.600000000000001" cy="11.8" r="1.35" fill="#a01414"/><circle cx="32.6" cy="11.8" r="1.35" fill="#a01414"/><circle cx="47.4" cy="11.8" r="1.35" fill="#a01414"/><circle cx="67.4" cy="11.8" r="1.35" fill="#a01414"/><circle cx="12.600000000000001" cy="25.8" r="1.35" fill="#a01414"/><circle cx="67.4" cy="25.8" r="1.35" fill="#a01414"/><circle cx="32.6" cy="92.6" r="1.35" fill="#a01414"/><circle cx="47.4" cy="92.6" r="1.35" fill="#a01414"/><circle cx="30.6" cy="39" r="0.7" fill="#d06a6a"/><circle cx="30.6" cy="65" r="0.7" fill="#d06a6a"/><circle cx="49.4" cy="39" r="0.7" fill="#d06a6a"/><circle cx="49.4" cy="65" r="0.7" fill="#d06a6a"/></svg>
<svg class="b" style="left:1036px;top:230px;" width="80" height="104" viewBox="0 0 80 104"><path d="M4.399999999999999 4.2H75.6V33H55.6V100.2H24.4V33H4.399999999999999Z" fill="#eeeeee" stroke="#303030" stroke-width="1.3" stroke-linejoin="miter"/><rect x="9.2" y="9.2" width="61.6" height="18.4" rx="2.6" fill="none" stroke="#555" stroke-width="1.05"/><rect x="29.4" y="9.2" width="21.2" height="85.4" rx="2.6" fill="none" stroke="#555" stroke-width="1.05"/><circle cx="12.600000000000001" cy="11.8" r="1.35" fill="#a01414"/><circle cx="32.6" cy="11.8" r="1.35" fill="#a01414"/><circle cx="47.4" cy="11.8" r="1.35" fill="#a01414"/><circle cx="67.4" cy="11.8" r="1.35" fill="#a01414"/><circle cx="12.600000000000001" cy="25.8" r="1.35" fill="#a01414"/><circle cx="67.4" cy="25.8" r="1.35" fill="#a01414"/><circle cx="32.6" cy="92.6" r="1.35" fill="#a01414"/><circle cx="40" cy="92.6" r="1.35" fill="#a01414"/><circle cx="47.4" cy="92.6" r="1.35" fill="#a01414"/><circle cx="30.6" cy="39" r="0.7" fill="#d06a6a"/><circle cx="30.6" cy="65" r="0.7" fill="#d06a6a"/><circle cx="49.4" cy="39" r="0.7" fill="#d06a6a"/><circle cx="49.4" cy="65" r="0.7" fill="#d06a6a"/></svg>
<svg class="b" style="left:1394.6px;top:230px;" width="80" height="104" viewBox="0 0 80 104"><path d="M4.399999999999999 4.2H75.6V33H55.6V100.2H24.4V33H4.399999999999999Z" fill="#eeeeee" stroke="#303030" stroke-width="1.3" stroke-linejoin="miter"/><rect x="9.2" y="9.2" width="61.6" height="18.4" rx="2.6" fill="none" stroke="#555" stroke-width="1.05"/><rect x="29.4" y="9.2" width="21.2" height="85.4" rx="2.6" fill="none" stroke="#555" stroke-width="1.05"/><circle cx="12.600000000000001" cy="11.8" r="1.35" fill="#a01414"/><circle cx="32.6" cy="11.8" r="1.35" fill="#a01414"/><circle cx="47.4" cy="11.8" r="1.35" fill="#a01414"/><circle cx="67.4" cy="11.8" r="1.35" fill="#a01414"/><circle cx="12.600000000000001" cy="25.8" r="1.35" fill="#a01414"/><circle cx="67.4" cy="25.8" r="1.35" fill="#a01414"/><circle cx="32.6" cy="92.6" r="1.35" fill="#a01414"/><circle cx="47.4" cy="92.6" r="1.35" fill="#a01414"/><circle cx="30.6" cy="39" r="0.7" fill="#d06a6a"/><circle cx="30.6" cy="65" r="0.7" fill="#d06a6a"/><circle cx="49.4" cy="39" r="0.7" fill="#d06a6a"/><circle cx="49.4" cy="65" r="0.7" fill="#d06a6a"/></svg>
<div class="t" style="left:706.30px;top:351px;font-size:11.3px;line-height:11.3px;color:#111;letter-spacing:0.002px;">93.6</div>
<svg class="b" style="left:580px;top:355px;" width="1000" height="280" viewBox="0 0 1000 280"><rect x="17.700000000000045" y="6.800000000000011" width="239.29999999999995" height="56.5" fill="#e6fbe6"/><rect x="257" y="11" width="478" height="52.30000000000001" fill="#e6fbe6"/><rect x="735" y="6.800000000000011" width="239" height="56.5" fill="#e6fbe6"/><rect x="17.700000000000045" y="63.30000000000001" width="239.29999999999995" height="39.0" fill="#cffce4"/><rect x="735" y="63.30000000000001" width="239" height="39.0" fill="#cffce4"/><rect x="17.700000000000045" y="102.30000000000001" width="239.29999999999995" height="56.69999999999999" fill="#dcffff"/><rect x="735" y="102.30000000000001" width="239" height="56.69999999999999" fill="#dcffff"/><rect x="257" y="63.30000000000001" width="478" height="95.69999999999999" fill="#90ee90"/><path d="M17.700000000000045 159V6.800000000000011H257V11H735V6.800000000000011H974V159" fill="none" stroke="#6e6e6e" stroke-width="1"/><path d="M257 11V102.30000000000001M735 11V102.30000000000001" stroke="#8c8c8c" stroke-width="1"/><path d="M257 102.30000000000001V159M735 102.30000000000001V159" stroke="#a8c8a8" stroke-width="0.8" stroke-dasharray="1 1"/><path d="M17.700000000000045 63.30000000000001H974" stroke="#3c3c3c" stroke-width="1.1"/><path d="M17.700000000000045 92H974" stroke="#222" stroke-width="1.4"/><path d="M17.700000000000045 102.30000000000001H974" stroke="#555" stroke-width="1"/><path d="M17.700000000000045 159H974" stroke="#222" stroke-width="1.3"/><path d="M17.700000000000045 159.8l8 11h-16z" fill="#fff" stroke="#c04848" stroke-width="1.1" stroke-linejoin="miter"/><path d="M974 159.8l8 10h-16z" fill="#fff" stroke="#c04848" stroke-width="1.1" stroke-linejoin="miter"/><path d="M966 172.4h16" stroke="#c04848" stroke-width="1.1"/><path d="M17.700000000000045 185V245" stroke="#b4b4b4" stroke-width="1"/><path d="M974 185V245" stroke="#b4b4b4" stroke-width="1"/><path d="M257 185V222" stroke="#b4b4b4" stroke-width="1"/><path d="M735 185V222" stroke="#b4b4b4" stroke-width="1"/><path d="M17.700000000000045 216.70000000000005H974M17.700000000000045 239.39999999999998H974" stroke="#9c9c9c" stroke-width="1"/><path d="M13.600000000000046 220.40000000000003l8.2-7.4" stroke="#111" stroke-width="1.5"/><path d="M252.9 220.40000000000003l8.2-7.4" stroke="#111" stroke-width="1.5"/><path d="M730.9 220.40000000000003l8.2-7.4" stroke="#111" stroke-width="1.5"/><path d="M969.9 220.40000000000003l8.2-7.4" stroke="#111" stroke-width="1.5"/><path d="M13.600000000000046 243.09999999999997l8.2-7.4" stroke="#111" stroke-width="1.5"/><path d="M969.9 243.09999999999997l8.2-7.4" stroke="#111" stroke-width="1.5"/></svg>
<div class="t" style="left:706.60px;top:559px;font-size:11.2px;line-height:11.2px;color:#222;letter-spacing:-0.066px;">1.50</div>
<div class="t" style="left:1065.20px;top:559px;font-size:11.2px;line-height:11.2px;color:#222;letter-spacing:-0.066px;">3.00</div>
<div class="t" style="left:1423.60px;top:559px;font-size:11.2px;line-height:11.2px;color:#222;letter-spacing:-0.066px;">1.50</div>
<div class="t" style="left:1065.20px;top:582px;font-size:11.2px;line-height:11.2px;color:#222;letter-spacing:-0.066px;">6.00</div>
<div class="t" style="left:593.25px;top:610px;font-size:15.6px;line-height:15.6px;color:#1414f0;letter-spacing:0.024px;">1</div>
<div class="t" style="left:1549.65px;top:610px;font-size:15.6px;line-height:15.6px;color:#1414f0;letter-spacing:0.024px;">2</div>
<svg class="b" style="left:246px;top:596px;" width="48" height="48" viewBox="0 0 48 48"><path d="M6.1 39.8V10" stroke="#4040ff" stroke-width="1.7"/><path d="M6.1 9.2l3.7 14.6-3.7-4-3.7 4z" fill="#2020ff" opacity=".85"/><path d="M6.1 39.9H36" stroke="#ff4040" stroke-width="1.7"/><path d="M36.8 39.9l-14.6 3.7 4-3.7-4-3.7z" fill="#ff2020" opacity=".85"/></svg>
<div class="t" style="left:257.00px;top:597px;font-size:12px;line-height:12px;color:#3030ff;letter-spacing:-0.930px;-webkit-text-stroke:0.3px #3030ff;">Z</div>
<div class="t" style="left:282.60px;top:621px;font-size:12.2px;line-height:12.2px;color:#ff3030;letter-spacing:-0.938px;-webkit-text-stroke:0.3px #ff3030;">X</div>
<div class="b" style="left:237.4px;top:654.6px;width:1048px;height:500.4px;background:#fff;border:1px solid #a8a8a8;border-left:1.6px solid #949494;"></div>
<div class="b" style="left:238px;top:655px;width:1047px;height:21px;background:#f1f1f1;border:1px solid #cfcfcf;border-bottom:1px solid #c4c4c4;"></div>
<div class="t" style="left:241.60px;top:660px;font-size:12px;line-height:12px;color:#2a2a2a;letter-spacing:-0.249px;">Data</div>
<svg class="b" style="left:1251.9px;top:663.2px;" width="8" height="5" viewBox="0 0 8 5"><path d="M0 0h8l-4 4.2z" fill="#1a1a1a"/></svg>
<svg class="b" style="left:1269.9px;top:660.4px;" width="9" height="11" viewBox="0 0 9 11"><path d="M2.6 5.6v-3.2c0-2.2 3.8-2.2 3.8 0v3.2" fill="none" stroke="#1a1a1a" stroke-width="1.2"/><path d="M5.9 1.6v4" stroke="#1a1a1a" stroke-width="1.5"/><path d="M0.8 6.6l1.2-1.2h5l1.2 1.2z" fill="#1a1a1a"/><path d="M4.5 6.6v3.6" stroke="#1a1a1a" stroke-width="1.2"/></svg>
<div class="b" style="left:238.5px;top:676px;width:1046px;height:27px;background:#c1c1c1;"></div>
<div class="b" style="left:238.5px;top:702px;width:1046px;height:1px;background:#a9a9a9;"></div>
<div class="b" style="left:302.3px;top:681.6px;width:160.89999999999998px;height:21.4px;background:linear-gradient(180deg,#f7f7f7,#e8e8e8);border:1px solid #b4b4b4;border-bottom:none;border-radius:3px 3px 0 0;"></div>
<div class="t" style="left:307.05px;top:686px;font-size:12px;line-height:12px;color:#262626;letter-spacing:0.073px;">Redistribution and reduction</div>
<div class="b" style="left:465px;top:681.6px;width:82.60000000000002px;height:21.4px;background:linear-gradient(180deg,#f7f7f7,#e8e8e8);border:1px solid #b4b4b4;border-bottom:none;border-radius:3px 3px 0 0;"></div>
<div class="t" style="left:470.00px;top:686px;font-size:12px;line-height:12px;color:#262626;letter-spacing:-0.176px;">Section check</div>
<div class="b" style="left:549.4px;top:681.6px;width:97.60000000000002px;height:21.4px;background:linear-gradient(180deg,#f7f7f7,#e8e8e8);border:1px solid #b4b4b4;border-bottom:none;border-radius:3px 3px 0 0;"></div>
<div class="t" style="left:554.10px;top:686px;font-size:12px;line-height:12px;color:#262626;letter-spacing:0.010px;">Deflection check</div>
<div class="b" style="left:649px;top:681.6px;width:90.79999999999995px;height:21.4px;background:linear-gradient(180deg,#f7f7f7,#e8e8e8);border:1px solid #b4b4b4;border-bottom:none;border-radius:3px 3px 0 0;"></div>
<div class="t" style="left:653.90px;top:686px;font-size:12px;line-height:12px;color:#262626;letter-spacing:0.060px;">Lateral stability</div>
<div class="b" style="left:240px;top:680.2px;width:60.4px;height:23.3px;background:linear-gradient(180deg,#f4f4f4,#fff 45%);border:1px solid #b0b0b0;border-bottom:none;border-radius:3px 3px 0 0;"></div>
<div class="t" style="left:245.80px;top:686px;font-size:12px;line-height:12px;color:#262626;letter-spacing:-0.290px;">Summary</div>
<div class="b" style="left:1267px;top:703px;width:17px;height:451px;background:#f1f1f1;"></div>
<svg class="b" style="left:1267px;top:711px;" width="17" height="14" viewBox="0 0 17 14"><path d="M2.2 11.2l6.3-6.6 6.3 6.6" fill="none" stroke="#5c5c5c" stroke-width="2.5"/></svg>
<svg class="b" style="left:1267px;top:1129.4px;" width="17" height="14" viewBox="0 0 17 14"><path d="M2.2 2.8l6.3 6.6 6.3-6.6" fill="none" stroke="#5c5c5c" stroke-width="2.5"/></svg>
<div class="b" style="left:1268.2px;top:729.6px;width:15px;height:111px;background:#c9c9c9;"></div>
<div class="t" style="left:253.80px;top:731px;font-size:13.35px;line-height:13.35px;color:#f26a21;letter-spacing:0.000px;font-weight:bold;transform:scaleY(1.05);transform-origin:0 11px;">Summary of section checks</div>
<div class="b" style="left:253.2px;top:752.5px;width:560.7px;height:195.39999999999998px;background:#fff;border:1px solid #d2d2d2;"></div>
<div class="b" style="left:254.2px;top:753.5px;width:558.7px;height:27.3px;background:#efefef;"></div>
<div class="b" style="left:522.6px;top:753.5px;width:1px;height:27.3px;background:#e0e0e0;"></div>
<div class="b" style="left:571.6px;top:753.5px;width:1px;height:27.3px;background:#e0e0e0;"></div>
<div class="b" style="left:634.1px;top:753.5px;width:1px;height:27.3px;background:#e0e0e0;"></div>
<div class="b" style="left:687.6px;top:753.5px;width:1px;height:27.3px;background:#e0e0e0;"></div>
<div class="b" style="left:746.6px;top:753.5px;width:1px;height:27.3px;background:#e0e0e0;"></div>
<div class="b" style="left:254.2px;top:813.7px;width:558.7px;height:33.299999999999955px;background:#f3f3f3;"></div>
<div class="b" style="left:254.2px;top:880.5px;width:558.7px;height:33.200000000000045px;background:#f3f3f3;"></div>
<div class="b" style="left:254.2px;top:780.8px;width:558.7px;height:1px;background:#e4e4e4;"></div>
<div class="b" style="left:254.2px;top:797.2px;width:558.7px;height:1px;background:#e4e4e4;"></div>
<div class="b" style="left:254.2px;top:813.7px;width:558.7px;height:1px;background:#e4e4e4;"></div>
<div class="b" style="left:254.2px;top:830.3px;width:558.7px;height:1px;background:#e4e4e4;"></div>
<div class="b" style="left:254.2px;top:847.0px;width:558.7px;height:1px;background:#e4e4e4;"></div>
<div class="b" style="left:254.2px;top:863.7px;width:558.7px;height:1px;background:#e4e4e4;"></div>
<div class="b" style="left:254.2px;top:880.5px;width:558.7px;height:1px;background:#e4e4e4;"></div>
<div class="b" style="left:254.2px;top:897.2px;width:558.7px;height:1px;background:#e4e4e4;"></div>
<div class="b" style="left:254.2px;top:913.7px;width:558.7px;height:1px;background:#e4e4e4;"></div>
<div class="b" style="left:254.2px;top:930.3px;width:558.7px;height:1px;background:#e4e4e4;"></div>
<div class="b" style="left:522.6px;top:798.2px;width:1px;height:15.5px;background:#e4e4e4;"></div>
<div class="b" style="left:571.6px;top:798.2px;width:1px;height:15.5px;background:#e4e4e4;"></div>
<div class="b" style="left:634.1px;top:798.2px;width:1px;height:15.5px;background:#e4e4e4;"></div>
<div class="b" style="left:687.6px;top:798.2px;width:1px;height:15.5px;background:#e4e4e4;"></div>
<div class="b" style="left:746.6px;top:798.2px;width:1px;height:15.5px;background:#e4e4e4;"></div>
<div class="b" style="left:522.6px;top:831.3px;width:1px;height:15.700000000000045px;background:#e4e4e4;"></div>
<div class="b" style="left:571.6px;top:831.3px;width:1px;height:15.700000000000045px;background:#e4e4e4;"></div>
<div class="b" style="left:634.1px;top:831.3px;width:1px;height:15.700000000000045px;background:#e4e4e4;"></div>
<div class="b" style="left:687.6px;top:831.3px;width:1px;height:15.700000000000045px;background:#e4e4e4;"></div>
<div class="b" style="left:746.6px;top:831.3px;width:1px;height:15.700000000000045px;background:#e4e4e4;"></div>
<div class="b" style="left:522.6px;top:864.7px;width:1px;height:15.799999999999955px;background:#e4e4e4;"></div>
<div class="b" style="left:571.6px;top:864.7px;width:1px;height:15.799999999999955px;background:#e4e4e4;"></div>
<div class="b" style="left:634.1px;top:864.7px;width:1px;height:15.799999999999955px;background:#e4e4e4;"></div>
<div class="b" style="left:687.6px;top:864.7px;width:1px;height:15.799999999999955px;background:#e4e4e4;"></div>
<div class="b" style="left:746.6px;top:864.7px;width:1px;height:15.799999999999955px;background:#e4e4e4;"></div>
<div class="b" style="left:522.6px;top:898.2px;width:1px;height:15.5px;background:#e4e4e4;"></div>
<div class="b" style="left:571.6px;top:898.2px;width:1px;height:15.5px;background:#e4e4e4;"></div>
<div class="b" style="left:634.1px;top:898.2px;width:1px;height:15.5px;background:#e4e4e4;"></div>
<div class="b" style="left:687.6px;top:898.2px;width:1px;height:15.5px;background:#e4e4e4;"></div>
<div class="b" style="left:746.6px;top:898.2px;width:1px;height:15.5px;background:#e4e4e4;"></div>
<div class="b" style="left:522.6px;top:931.3px;width:1px;height:15.600000000000023px;background:#e4e4e4;"></div>
<div class="b" style="left:571.6px;top:931.3px;width:1px;height:15.600000000000023px;background:#e4e4e4;"></div>
<div class="b" style="left:634.1px;top:931.3px;width:1px;height:15.600000000000023px;background:#e4e4e4;"></div>
<div class="b" style="left:687.6px;top:931.3px;width:1px;height:15.600000000000023px;background:#e4e4e4;"></div>
<div class="b" style="left:746.6px;top:931.3px;width:1px;height:15.600000000000023px;background:#e4e4e4;"></div>
<div class="t" style="left:311.49px;top:762px;font-size:9.65px;line-height:9.65px;color:#1c1c1c;letter-spacing:0.000px;font-weight:bold;transform:scaleY(1.1);transform-origin:0 8px;">Combination for deflection check</div>
<div class="t" style="left:539.42px;top:757px;font-size:9.65px;line-height:9.65px;color:#1c1c1c;letter-spacing:0.000px;font-weight:bold;transform:scaleY(1.1);transform-origin:0 8px;">N</div>
<div class="t" style="left:546.39px;top:761px;font-size:6.562px;line-height:6.562px;color:#1c1c1c;letter-spacing:0.000px;font-weight:bold;transform:scaleY(1.1);transform-origin:0 5px;">Ed</div>
<div class="t" style="left:537.72px;top:768px;font-size:9.65px;line-height:9.65px;color:#1c1c1c;letter-spacing:0.000px;font-weight:bold;transform:scaleY(1.1);transform-origin:0 8px;">[kN]</div>
<div class="t" style="left:591.90px;top:757px;font-size:9.65px;line-height:9.65px;color:#1c1c1c;letter-spacing:0.000px;font-weight:bold;transform:scaleY(1.1);transform-origin:0 8px;">M</div>
<div class="t" style="left:599.94px;top:761px;font-size:6.562px;line-height:6.562px;color:#1c1c1c;letter-spacing:0.000px;font-weight:bold;transform:scaleY(1.1);transform-origin:0 5px;">Ed,y</div>
<div class="t" style="left:589.18px;top:768px;font-size:9.65px;line-height:9.65px;color:#1c1c1c;letter-spacing:0.000px;font-weight:bold;transform:scaleY(1.1);transform-origin:0 8px;">[kNm]</div>
<div class="t" style="left:653.44px;top:757px;font-size:9.65px;line-height:9.65px;color:#1c1c1c;letter-spacing:0.000px;font-weight:bold;transform:scaleY(1.1);transform-origin:0 8px;">V</div>
<div class="t" style="left:659.88px;top:761px;font-size:6.562px;line-height:6.562px;color:#1c1c1c;letter-spacing:0.000px;font-weight:bold;transform:scaleY(1.1);transform-origin:0 5px;">Ed</div>
<div class="t" style="left:651.47px;top:768px;font-size:9.65px;line-height:9.65px;color:#1c1c1c;letter-spacing:0.000px;font-weight:bold;transform:scaleY(1.1);transform-origin:0 8px;">[kN]</div>
<div class="t" style="left:704.49px;top:757px;font-size:9.65px;line-height:9.65px;color:#1c1c1c;letter-spacing:0.000px;font-weight:bold;transform:scaleY(1.1);transform-origin:0 8px;">Value</div>
<div class="t" style="left:709.60px;top:768px;font-size:9.65px;line-height:9.65px;color:#1c1c1c;letter-spacing:0.000px;font-weight:bold;transform:scaleY(1.1);transform-origin:0 8px;">[%]</div>
<div class="t" style="left:765.27px;top:762px;font-size:9.65px;line-height:9.65px;color:#1c1c1c;letter-spacing:0.000px;font-weight:bold;transform:scaleY(1.1);transform-origin:0 8px;">Check</div>
<div class="t" style="left:258.80px;top:785px;font-size:9.65px;line-height:9.65px;color:#1c1c1c;letter-spacing:0.000px;transform:scaleY(1.16);transform-origin:0 8px;">Capacity N-M-M, Zone: B-B (1.50 - 4.50)</div>
<div class="t" style="left:258.80px;top:802px;font-size:9.65px;line-height:9.65px;color:#1c1c1c;letter-spacing:0.000px;transform:scaleY(1.16);transform-origin:0 8px;">ULSF(2)</div>
<div class="t" style="left:552.98px;top:802px;font-size:9.65px;line-height:9.65px;color:#1c1c1c;letter-spacing:0.000px;transform:scaleY(1.16);transform-origin:0 8px;">0.0</div>
<div class="t" style="left:604.75px;top:802px;font-size:9.65px;line-height:9.65px;color:#1c1c1c;letter-spacing:0.000px;transform:scaleY(1.16);transform-origin:0 8px;">153.5</div>
<div class="t" style="left:668.98px;top:802px;font-size:9.65px;line-height:9.65px;color:#1c1c1c;letter-spacing:0.000px;transform:scaleY(1.16);transform-origin:0 8px;">0.0</div>
<div class="t" style="left:722.62px;top:802px;font-size:9.65px;line-height:9.65px;color:#1c1c1c;letter-spacing:0.000px;transform:scaleY(1.16);transform-origin:0 8px;">83.2</div>
<div class="t" style="left:752.20px;top:802px;font-size:9.65px;line-height:9.65px;color:#1c1c1c;letter-spacing:0.000px;transform:scaleY(1.16);transform-origin:0 8px;">OK</div>
<div class="t" style="left:258.80px;top:818px;font-size:9.65px;line-height:9.65px;color:#1c1c1c;letter-spacing:0.000px;transform:scaleY(1.16);transform-origin:0 8px;">Shear, Zone: B-B (1.50 - 4.50)</div>
<div class="t" style="left:258.80px;top:835px;font-size:9.65px;line-height:9.65px;color:#1c1c1c;letter-spacing:0.000px;transform:scaleY(1.16);transform-origin:0 8px;">ULSF(2)</div>
<div class="t" style="left:552.98px;top:835px;font-size:9.65px;line-height:9.65px;color:#1c1c1c;letter-spacing:0.000px;transform:scaleY(1.16);transform-origin:0 8px;">0.0</div>
<div class="t" style="left:605.47px;top:835px;font-size:9.65px;line-height:9.65px;color:#1c1c1c;letter-spacing:0.000px;transform:scaleY(1.16);transform-origin:0 8px;">113.6</div>
<div class="t" style="left:660.40px;top:835px;font-size:9.65px;line-height:9.65px;color:#1c1c1c;letter-spacing:0.000px;transform:scaleY(1.16);transform-origin:0 8px;">-51.2</div>
<div class="t" style="left:722.62px;top:835px;font-size:9.65px;line-height:9.65px;color:#1c1c1c;letter-spacing:0.000px;transform:scaleY(1.16);transform-origin:0 8px;">66.5</div>
<div class="t" style="left:752.20px;top:835px;font-size:9.65px;line-height:9.65px;color:#1c1c1c;letter-spacing:0.000px;transform:scaleY(1.16);transform-origin:0 8px;">OK</div>
<div class="t" style="left:258.80px;top:851px;font-size:9.65px;line-height:9.65px;color:#1c1c1c;letter-spacing:0.000px;transform:scaleY(1.16);transform-origin:0 8px;">Interaction, Zone: A-A (0.00 - 1.50)</div>
<div class="t" style="left:258.80px;top:869px;font-size:9.65px;line-height:9.65px;color:#1c1c1c;letter-spacing:0.000px;transform:scaleY(1.16);transform-origin:0 8px;">ULSF(2)</div>
<div class="t" style="left:552.98px;top:869px;font-size:9.65px;line-height:9.65px;color:#1c1c1c;letter-spacing:0.000px;transform:scaleY(1.16);transform-origin:0 8px;">0.0</div>
<div class="t" style="left:605.47px;top:869px;font-size:9.65px;line-height:9.65px;color:#1c1c1c;letter-spacing:0.000px;transform:scaleY(1.16);transform-origin:0 8px;">113.6</div>
<div class="t" style="left:663.62px;top:869px;font-size:9.65px;line-height:9.65px;color:#1c1c1c;letter-spacing:0.000px;transform:scaleY(1.16);transform-origin:0 8px;">51.2</div>
<div class="t" style="left:722.62px;top:869px;font-size:9.65px;line-height:9.65px;color:#1c1c1c;letter-spacing:0.000px;transform:scaleY(1.16);transform-origin:0 8px;">93.6</div>
<div class="t" style="left:752.20px;top:869px;font-size:9.65px;line-height:9.65px;color:#1c1c1c;letter-spacing:0.000px;transform:scaleY(1.16);transform-origin:0 8px;">OK</div>
<div class="t" style="left:258.80px;top:885px;font-size:9.65px;line-height:9.65px;color:#1c1c1c;letter-spacing:0.000px;transform:scaleY(1.16);transform-origin:0 8px;">Stress Limitation, Zone: A-A (4.50 - 6.00)</div>
<div class="t" style="left:258.80px;top:902px;font-size:9.65px;line-height:9.65px;color:#1c1c1c;letter-spacing:0.000px;transform:scaleY(1.16);transform-origin:0 8px;">SLSC(5)</div>
<div class="t" style="left:552.98px;top:902px;font-size:9.65px;line-height:9.65px;color:#1c1c1c;letter-spacing:0.000px;transform:scaleY(1.16);transform-origin:0 8px;">0.0</div>
<div class="t" style="left:610.12px;top:902px;font-size:9.65px;line-height:9.65px;color:#1c1c1c;letter-spacing:0.000px;transform:scaleY(1.16);transform-origin:0 8px;">86.7</div>
<div class="t" style="left:660.40px;top:902px;font-size:9.65px;line-height:9.65px;color:#1c1c1c;letter-spacing:0.000px;transform:scaleY(1.16);transform-origin:0 8px;">-39.1</div>
<div class="t" style="left:722.62px;top:902px;font-size:9.65px;line-height:9.65px;color:#1c1c1c;letter-spacing:0.000px;transform:scaleY(1.16);transform-origin:0 8px;">93.5</div>
<div class="t" style="left:752.20px;top:902px;font-size:9.65px;line-height:9.65px;color:#1c1c1c;letter-spacing:0.000px;transform:scaleY(1.16);transform-origin:0 8px;">OK</div>
<div class="t" style="left:258.80px;top:918px;font-size:9.65px;line-height:9.65px;color:#1c1c1c;letter-spacing:0.000px;transform:scaleY(1.16);transform-origin:0 8px;">Crack Width, Zone: A-A (4.50 - 6.00)</div>
<div class="t" style="left:258.80px;top:935px;font-size:9.65px;line-height:9.65px;color:#1c1c1c;letter-spacing:0.000px;transform:scaleY(1.16);transform-origin:0 8px;">SLSQ(9)</div>
<div class="t" style="left:552.98px;top:935px;font-size:9.65px;line-height:9.65px;color:#1c1c1c;letter-spacing:0.000px;transform:scaleY(1.16);transform-origin:0 8px;">0.0</div>
<div class="t" style="left:610.12px;top:935px;font-size:9.65px;line-height:9.65px;color:#1c1c1c;letter-spacing:0.000px;transform:scaleY(1.16);transform-origin:0 8px;">58.8</div>
<div class="t" style="left:660.40px;top:935px;font-size:9.65px;line-height:9.65px;color:#1c1c1c;letter-spacing:0.000px;transform:scaleY(1.16);transform-origin:0 8px;">-26.5</div>
<div class="t" style="left:722.62px;top:935px;font-size:9.65px;line-height:9.65px;color:#1c1c1c;letter-spacing:0.000px;transform:scaleY(1.16);transform-origin:0 8px;">89.4</div>
<div class="t" style="left:752.20px;top:935px;font-size:9.65px;line-height:9.65px;color:#1c1c1c;letter-spacing:0.000px;transform:scaleY(1.16);transform-origin:0 8px;">OK</div>
<div class="t" style="left:253.80px;top:962px;font-size:13.35px;line-height:13.35px;color:#f26a21;letter-spacing:0.011px;font-weight:bold;transform:scaleY(1.05);transform-origin:0 11px;">Summary of deflection checks</div>
<div class="b" style="left:253.2px;top:984.2px;width:560.7px;height:61.899999999999864px;background:#fff;border:1px solid #d2d2d2;"></div>
<div class="b" style="left:254.2px;top:985.2px;width:558.7px;height:26.8px;background:#efefef;"></div>
<div class="b" style="left:311px;top:985.2px;width:1px;height:26.8px;background:#e0e0e0;"></div>
<div class="b" style="left:378.8px;top:985.2px;width:1px;height:26.8px;background:#e0e0e0;"></div>
<div class="b" style="left:446.3px;top:985.2px;width:1px;height:26.8px;background:#e0e0e0;"></div>
<div class="b" style="left:513.5px;top:985.2px;width:1px;height:26.8px;background:#e0e0e0;"></div>
<div class="b" style="left:581.3px;top:985.2px;width:1px;height:26.8px;background:#e0e0e0;"></div>
<div class="b" style="left:662.6px;top:985.2px;width:1px;height:26.8px;background:#e0e0e0;"></div>
<div class="b" style="left:734.1px;top:985.2px;width:1px;height:26.8px;background:#e0e0e0;"></div>
<div class="b" style="left:254.2px;top:1012.0px;width:558.7px;height:1px;background:#e4e4e4;"></div>
<div class="b" style="left:254.2px;top:1028.5px;width:558.7px;height:1px;background:#e4e4e4;"></div>
<div class="b" style="left:311px;top:1029.5px;width:1px;height:15.599999999999909px;background:#e4e4e4;"></div>
<div class="b" style="left:378.8px;top:1029.5px;width:1px;height:15.599999999999909px;background:#e4e4e4;"></div>
<div class="b" style="left:446.3px;top:1029.5px;width:1px;height:15.599999999999909px;background:#e4e4e4;"></div>
<div class="b" style="left:513.5px;top:1029.5px;width:1px;height:15.599999999999909px;background:#e4e4e4;"></div>
<div class="b" style="left:581.3px;top:1029.5px;width:1px;height:15.599999999999909px;background:#e4e4e4;"></div>
<div class="b" style="left:662.6px;top:1029.5px;width:1px;height:15.599999999999909px;background:#e4e4e4;"></div>
<div class="b" style="left:734.1px;top:1029.5px;width:1px;height:15.599999999999909px;background:#e4e4e4;"></div>
<div class="t" style="left:277.33px;top:988px;font-size:9.65px;line-height:9.65px;color:#1c1c1c;letter-spacing:0.000px;font-weight:bold;transform:scaleY(1.1);transform-origin:0 8px;">d</div>
<div class="t" style="left:283.22px;top:992px;font-size:6.562px;line-height:6.562px;color:#1c1c1c;letter-spacing:0.000px;font-weight:bold;transform:scaleY(1.1);transform-origin:0 5px;">x</div>
<div class="t" style="left:274.60px;top:999px;font-size:9.65px;line-height:9.65px;color:#1c1c1c;letter-spacing:0.000px;font-weight:bold;transform:scaleY(1.1);transform-origin:0 8px;">[m]</div>
<div class="t" style="left:335.57px;top:988px;font-size:9.65px;line-height:9.65px;color:#1c1c1c;letter-spacing:0.000px;font-weight:bold;transform:scaleY(1.1);transform-origin:0 8px;">u</div>
<div class="t" style="left:341.47px;top:992px;font-size:6.562px;line-height:6.562px;color:#1c1c1c;letter-spacing:0.000px;font-weight:bold;transform:scaleY(1.1);transform-origin:0 5px;">z,lin</div>
<div class="t" style="left:333.11px;top:999px;font-size:9.65px;line-height:9.65px;color:#1c1c1c;letter-spacing:0.000px;font-weight:bold;transform:scaleY(1.1);transform-origin:0 8px;">[mm]</div>
<div class="t" style="left:404.13px;top:988px;font-size:9.65px;line-height:9.65px;color:#1c1c1c;letter-spacing:0.000px;font-weight:bold;transform:scaleY(1.1);transform-origin:0 8px;">u</div>
<div class="t" style="left:410.03px;top:992px;font-size:6.562px;line-height:6.562px;color:#1c1c1c;letter-spacing:0.000px;font-weight:bold;transform:scaleY(1.1);transform-origin:0 5px;">z,st</div>
<div class="t" style="left:400.76px;top:999px;font-size:9.65px;line-height:9.65px;color:#1c1c1c;letter-spacing:0.000px;font-weight:bold;transform:scaleY(1.1);transform-origin:0 8px;">[mm]</div>
<div class="t" style="left:472.58px;top:988px;font-size:9.65px;line-height:9.65px;color:#1c1c1c;letter-spacing:0.000px;font-weight:bold;transform:scaleY(1.1);transform-origin:0 8px;">u</div>
<div class="t" style="left:478.47px;top:992px;font-size:6.562px;line-height:6.562px;color:#1c1c1c;letter-spacing:0.000px;font-weight:bold;transform:scaleY(1.1);transform-origin:0 5px;">z,II</div>
<div class="t" style="left:468.11px;top:999px;font-size:9.65px;line-height:9.65px;color:#1c1c1c;letter-spacing:0.000px;font-weight:bold;transform:scaleY(1.1);transform-origin:0 8px;">[mm]</div>
<div class="t" style="left:539.90px;top:988px;font-size:9.65px;line-height:9.65px;color:#1c1c1c;letter-spacing:0.000px;font-weight:bold;transform:scaleY(1.1);transform-origin:0 8px;">u</div>
<div class="t" style="left:545.79px;top:992px;font-size:6.562px;line-height:6.562px;color:#1c1c1c;letter-spacing:0.000px;font-weight:bold;transform:scaleY(1.1);transform-origin:0 5px;">z,lt</div>
<div class="t" style="left:535.61px;top:999px;font-size:9.65px;line-height:9.65px;color:#1c1c1c;letter-spacing:0.000px;font-weight:bold;transform:scaleY(1.1);transform-origin:0 8px;">[mm]</div>
<div class="t" style="left:606.81px;top:988px;font-size:9.65px;line-height:9.65px;color:#1c1c1c;letter-spacing:0.000px;font-weight:bold;transform:scaleY(1.1);transform-origin:0 8px;">u</div>
<div class="t" style="left:612.71px;top:992px;font-size:6.562px;line-height:6.562px;color:#1c1c1c;letter-spacing:0.000px;font-weight:bold;transform:scaleY(1.1);transform-origin:0 5px;">z,lim (±)</div>
<div class="t" style="left:610.16px;top:999px;font-size:9.65px;line-height:9.65px;color:#1c1c1c;letter-spacing:0.000px;font-weight:bold;transform:scaleY(1.1);transform-origin:0 8px;">[mm]</div>
<div class="t" style="left:685.74px;top:988px;font-size:9.65px;line-height:9.65px;color:#1c1c1c;letter-spacing:0.000px;font-weight:bold;transform:scaleY(1.1);transform-origin:0 8px;">Value</div>
<div class="t" style="left:690.85px;top:999px;font-size:9.65px;line-height:9.65px;color:#1c1c1c;letter-spacing:0.000px;font-weight:bold;transform:scaleY(1.1);transform-origin:0 8px;">[%]</div>
<div class="t" style="left:759.02px;top:994px;font-size:9.65px;line-height:9.65px;color:#1c1c1c;letter-spacing:0.000px;font-weight:bold;transform:scaleY(1.1);transform-origin:0 8px;">Check</div>
<div class="t" style="left:258.80px;top:1016px;font-size:9.65px;line-height:9.65px;color:#1c1c1c;letter-spacing:0.000px;transform:scaleY(1.16);transform-origin:0 8px;">Total deflection</div>
<div class="t" style="left:287.02px;top:1032px;font-size:9.65px;line-height:9.65px;color:#1c1c1c;letter-spacing:0.000px;transform:scaleY(1.16);transform-origin:0 8px;">3.00</div>
<div class="t" style="left:356.97px;top:1032px;font-size:9.65px;line-height:9.65px;color:#1c1c1c;letter-spacing:0.000px;transform:scaleY(1.16);transform-origin:0 8px;">-2.8</div>
<div class="t" style="left:419.10px;top:1032px;font-size:9.65px;line-height:9.65px;color:#1c1c1c;letter-spacing:0.000px;transform:scaleY(1.16);transform-origin:0 8px;">-12.2</div>
<div class="t" style="left:487.02px;top:1032px;font-size:9.65px;line-height:9.65px;color:#1c1c1c;letter-spacing:0.000px;transform:scaleY(1.16);transform-origin:0 8px;">-11.6</div>
<div class="t" style="left:554.10px;top:1032px;font-size:9.65px;line-height:9.65px;color:#1c1c1c;letter-spacing:0.000px;transform:scaleY(1.16);transform-origin:0 8px;">-17.2</div>
<div class="t" style="left:638.62px;top:1032px;font-size:9.65px;line-height:9.65px;color:#1c1c1c;letter-spacing:0.000px;transform:scaleY(1.16);transform-origin:0 8px;">24.0</div>
<div class="t" style="left:710.12px;top:1032px;font-size:9.65px;line-height:9.65px;color:#1c1c1c;letter-spacing:0.000px;transform:scaleY(1.16);transform-origin:0 8px;">48.2</div>
<div class="t" style="left:766.53px;top:1032px;font-size:9.65px;line-height:9.65px;color:#1c1c1c;letter-spacing:0.000px;transform:scaleY(1.16);transform-origin:0 8px;">OK</div>
<div class="t" style="left:253.20px;top:1061px;font-size:13.35px;line-height:13.35px;color:#f26a21;letter-spacing:0.004px;font-weight:bold;transform:scaleY(1.05);transform-origin:0 11px;">Lateral stability</div>
<div class="b" style="left:253.2px;top:1081.1px;width:560.7px;height:45.80000000000018px;background:#fff;border:1px solid #d2d2d2;"></div>
<div class="b" style="left:254.2px;top:1082.1px;width:558.7px;height:27.1px;background:#efefef;"></div>
<div class="b" style="left:354.8px;top:1082.1px;width:1px;height:27.1px;background:#e0e0e0;"></div>
<div class="b" style="left:394.8px;top:1082.1px;width:1px;height:27.1px;background:#e0e0e0;"></div>
<div class="b" style="left:434.8px;top:1082.1px;width:1px;height:27.1px;background:#e0e0e0;"></div>
<div class="b" style="left:475px;top:1082.1px;width:1px;height:27.1px;background:#e0e0e0;"></div>
<div class="b" style="left:546.6px;top:1082.1px;width:1px;height:27.1px;background:#e0e0e0;"></div>
<div class="b" style="left:594.4px;top:1082.1px;width:1px;height:27.1px;background:#e0e0e0;"></div>
<div class="b" style="left:641.6px;top:1082.1px;width:1px;height:27.1px;background:#e0e0e0;"></div>
<div class="b" style="left:682.9px;top:1082.1px;width:1px;height:27.1px;background:#e0e0e0;"></div>
<div class="b" style="left:758.5px;top:1082.1px;width:1px;height:27.1px;background:#e0e0e0;"></div>
<div class="b" style="left:254.2px;top:1109.2px;width:558.7px;height:1px;background:#e4e4e4;"></div>
<div class="b" style="left:354.8px;top:1110.2px;width:1px;height:15.700000000000045px;background:#e4e4e4;"></div>
<div class="b" style="left:394.8px;top:1110.2px;width:1px;height:15.700000000000045px;background:#e4e4e4;"></div>
<div class="b" style="left:434.8px;top:1110.2px;width:1px;height:15.700000000000045px;background:#e4e4e4;"></div>
<div class="b" style="left:475px;top:1110.2px;width:1px;height:15.700000000000045px;background:#e4e4e4;"></div>
<div class="b" style="left:546.6px;top:1110.2px;width:1px;height:15.700000000000045px;background:#e4e4e4;"></div>
<div class="b" style="left:594.4px;top:1110.2px;width:1px;height:15.700000000000045px;background:#e4e4e4;"></div>
<div class="b" style="left:641.6px;top:1110.2px;width:1px;height:15.700000000000045px;background:#e4e4e4;"></div>
<div class="b" style="left:682.9px;top:1110.2px;width:1px;height:15.700000000000045px;background:#e4e4e4;"></div>
<div class="b" style="left:758.5px;top:1110.2px;width:1px;height:15.700000000000045px;background:#e4e4e4;"></div>
<div class="t" style="left:277.46px;top:1091px;font-size:9.65px;line-height:9.65px;color:#1c1c1c;letter-spacing:0.000px;font-weight:bold;transform:scaleY(1.1);transform-origin:0 8px;">Description</div>
<div class="t" style="left:371.85px;top:1086px;font-size:9.65px;line-height:9.65px;color:#1c1c1c;letter-spacing:0.000px;font-weight:bold;transform:scaleY(1.1);transform-origin:0 8px;">b</div>
<div class="t" style="left:368.10px;top:1097px;font-size:9.65px;line-height:9.65px;color:#1c1c1c;letter-spacing:0.000px;transform:scaleY(1.16);transform-origin:0 8px;">[m]</div>
<div class="t" style="left:411.85px;top:1086px;font-size:9.65px;line-height:9.65px;color:#1c1c1c;letter-spacing:0.000px;font-weight:bold;transform:scaleY(1.1);transform-origin:0 8px;">h</div>
<div class="t" style="left:408.10px;top:1097px;font-size:9.65px;line-height:9.65px;color:#1c1c1c;letter-spacing:0.000px;transform:scaleY(1.16);transform-origin:0 8px;">[m]</div>
<div class="t" style="left:450.64px;top:1086px;font-size:9.65px;line-height:9.65px;color:#1c1c1c;letter-spacing:0.000px;font-weight:bold;transform:scaleY(1.1);transform-origin:0 8px;">l</div>
<div class="t" style="left:453.32px;top:1090px;font-size:6.562px;line-height:6.562px;color:#1c1c1c;letter-spacing:0.000px;font-weight:bold;transform:scaleY(1.1);transform-origin:0 5px;">0t</div>
<div class="t" style="left:448.20px;top:1097px;font-size:9.65px;line-height:9.65px;color:#1c1c1c;letter-spacing:0.000px;transform:scaleY(1.16);transform-origin:0 8px;">[m]</div>
<div class="t" style="left:490.16px;top:1091px;font-size:9.65px;line-height:9.65px;color:#1c1c1c;letter-spacing:0.000px;font-weight:bold;transform:scaleY(1.1);transform-origin:0 8px;">Situation</div>
<div class="t" style="left:559.10px;top:1086px;font-size:9.65px;line-height:9.65px;color:#1c1c1c;letter-spacing:0.219px;font-weight:bold;">l</div>
<div class="t" style="left:562.10px;top:1090px;font-size:6.562px;line-height:6.562px;color:#1c1c1c;letter-spacing:0.765px;font-weight:bold;">0t</div>
<div class="t" style="left:570.10px;top:1086px;font-size:9.65px;line-height:9.65px;color:#1c1c1c;letter-spacing:0.372px;font-weight:bold;">/ b</div>
<div class="t" style="left:566.21px;top:1097px;font-size:9.65px;line-height:9.65px;color:#1c1c1c;letter-spacing:0.000px;transform:scaleY(1.16);transform-origin:0 8px;">[-]</div>
<div class="t" style="left:606.47px;top:1086px;font-size:9.65px;line-height:9.65px;color:#1c1c1c;letter-spacing:0.000px;font-weight:bold;transform:scaleY(1.1);transform-origin:0 8px;">Limit</div>
<div class="t" style="left:613.71px;top:1097px;font-size:9.65px;line-height:9.65px;color:#1c1c1c;letter-spacing:0.000px;transform:scaleY(1.16);transform-origin:0 8px;">[-]</div>
<div class="t" style="left:652.33px;top:1086px;font-size:9.65px;line-height:9.65px;color:#1c1c1c;letter-spacing:0.000px;font-weight:bold;transform:scaleY(1.1);transform-origin:0 8px;">h / b</div>
<div class="t" style="left:657.96px;top:1097px;font-size:9.65px;line-height:9.65px;color:#1c1c1c;letter-spacing:0.000px;transform:scaleY(1.16);transform-origin:0 8px;">[-]</div>
<div class="t" style="left:697.92px;top:1086px;font-size:9.65px;line-height:9.65px;color:#1c1c1c;letter-spacing:0.000px;font-weight:bold;transform:scaleY(1.1);transform-origin:0 8px;">Limit h / b</div>
<div class="t" style="left:716.41px;top:1097px;font-size:9.65px;line-height:9.65px;color:#1c1c1c;letter-spacing:0.000px;transform:scaleY(1.16);transform-origin:0 8px;">[-]</div>
<div class="t" style="left:771.22px;top:1091px;font-size:9.65px;line-height:9.65px;color:#1c1c1c;letter-spacing:0.000px;font-weight:bold;transform:scaleY(1.1);transform-origin:0 8px;">Check</div>
<div class="t" style="left:258.80px;top:1114px;font-size:9.65px;line-height:9.65px;color:#1c1c1c;letter-spacing:0.000px;transform:scaleY(1.16);transform-origin:0 8px;">Lateral stability</div>
<div class="t" style="left:370.82px;top:1114px;font-size:9.65px;line-height:9.65px;color:#1c1c1c;letter-spacing:0.000px;transform:scaleY(1.16);transform-origin:0 8px;">0.45</div>
<div class="t" style="left:410.82px;top:1114px;font-size:9.65px;line-height:9.65px;color:#1c1c1c;letter-spacing:0.000px;transform:scaleY(1.16);transform-origin:0 8px;">0.60</div>
<div class="t" style="left:451.02px;top:1114px;font-size:9.65px;line-height:9.65px;color:#1c1c1c;letter-spacing:0.000px;transform:scaleY(1.16);transform-origin:0 8px;">6.00</div>
<div class="t" style="left:480.60px;top:1114px;font-size:9.65px;line-height:9.65px;color:#1c1c1c;letter-spacing:0.000px;transform:scaleY(1.16);transform-origin:0 8px;">Persistent</div>
<div class="t" style="left:565.05px;top:1114px;font-size:9.65px;line-height:9.65px;color:#1c1c1c;letter-spacing:0.000px;transform:scaleY(1.16);transform-origin:0 8px;">13.33</div>
<div class="t" style="left:612.25px;top:1114px;font-size:9.65px;line-height:9.65px;color:#1c1c1c;letter-spacing:0.000px;transform:scaleY(1.16);transform-origin:0 8px;">45.43</div>
<div class="t" style="left:658.92px;top:1114px;font-size:9.65px;line-height:9.65px;color:#1c1c1c;letter-spacing:0.000px;transform:scaleY(1.16);transform-origin:0 8px;">1.33</div>
<div class="t" style="left:734.52px;top:1114px;font-size:9.65px;line-height:9.65px;color:#1c1c1c;letter-spacing:0.000px;transform:scaleY(1.16);transform-origin:0 8px;">2.50</div>
<div class="t" style="left:764.10px;top:1114px;font-size:9.65px;line-height:9.65px;color:#1c1c1c;letter-spacing:0.000px;transform:scaleY(1.16);transform-origin:0 8px;">OK</div>
<div class="b" style="left:250px;top:1136px;width:300px;height:18.2px;overflow:hidden;">
<div class="t" style="left:3.2px;top:6px;font-size:13.35px;line-height:13.35px;color:#f26a21;font-weight:bold;transform:scaleY(1.05);transform-origin:0 11px;">Bill of material</div></div>
<div class="b" style="left:1289.5px;top:654.6px;width:625.2px;height:500.4px;background:#fff;border:1px solid #a8a8a8;"></div>
<div class="b" style="left:1290px;top:655px;width:624.3px;height:21px;background:#f1f1f1;border:1px solid #cfcfcf;border-bottom:1px solid #c4c4c4;"></div>
<div class="t" style="left:1293.60px;top:660px;font-size:12px;line-height:12px;color:#2a2a2a;letter-spacing:-0.013px;">Details</div>
<svg class="b" style="left:1881.2px;top:663.2px;" width="8" height="5" viewBox="0 0 8 5"><path d="M0 0h8l-4 4.2z" fill="#1a1a1a"/></svg>
<svg class="b" style="left:1899.2px;top:660.4px;" width="9" height="11" viewBox="0 0 9 11"><path d="M2.6 5.6v-3.2c0-2.2 3.8-2.2 3.8 0v3.2" fill="none" stroke="#1a1a1a" stroke-width="1.2"/><path d="M5.9 1.6v4" stroke="#1a1a1a" stroke-width="1.5"/><path d="M0.8 6.6l1.2-1.2h5l1.2 1.2z" fill="#1a1a1a"/><path d="M4.5 6.6v3.6" stroke="#1a1a1a" stroke-width="1.2"/></svg>
<div class="t" style="left:1300.00px;top:692px;font-size:12px;line-height:12px;color:#2e2e2e;letter-spacing:-0.080px;">Overall check status of design member:</div>
<svg class="b" style="left:1509.1px;top:688.6999999999999px;" width="17.4" height="17.4" viewBox="0 0 17.4 17.4"><circle cx="8.7" cy="8.7" r="7.7" fill="#5fd35a"/><circle cx="8.7" cy="8.7" r="7.2" fill="none" stroke="#8fe688" stroke-width="0.9"/><path d="M4.799999999999999 9.1l2.9 3 5-6.4" fill="none" stroke="#fff" stroke-width="2.1" stroke-linecap="round" stroke-linejoin="round"/></svg>
<div class="t" style="left:1300.00px;top:714px;font-size:12px;line-height:12px;color:#2e2e2e;letter-spacing:0.044px;">Redistribution and reduction:</div>
<svg class="b" style="left:1456.6px;top:712.4px;" width="16" height="15" viewBox="0 0 16 15"><path d="M8 1l6.8 12.4h-13.6z" fill="#fbe85a" stroke="#f4dc3c" stroke-width="1" stroke-linejoin="round"/><path d="M8 5.4v4.4" stroke="#222" stroke-width="1.7"/><circle cx="8" cy="11.5" r="0.95" fill="#222"/></svg>
<div class="t" style="left:1306.30px;top:733px;font-size:12px;line-height:12px;color:#2e2e2e;letter-spacing:0.093px;">Calculation of redistribution and reduction finished with</div>
<div class="t" style="left:1306.30px;top:749px;font-size:12px;line-height:12px;color:#2e2e2e;letter-spacing:0.084px;">some nonconformity.</div>
<div class="t" style="left:1300.00px;top:770px;font-size:12px;line-height:12px;color:#2e2e2e;letter-spacing:-0.365px;">Sections checks</div>
<div class="b" style="left:1300.5px;top:788.8px;width:301.4px;height:153.7px;background:#fff;border:1.7px solid #c6c6c6;"></div>
<div class="b" style="left:1302.2px;top:815.8px;width:2.6px;height:125px;background:linear-gradient(90deg,#8e8e8e,#d0d0d0);"></div>
<div class="b" style="left:1302.2px;top:790.0px;width:298.0px;height:25.8px;background:linear-gradient(180deg,#787878 0%,#6a6a6a 22%,#505050 40%,#161616 50%,#1a1a1a 68%,#3c3c3c 100%);"></div>
<div class="b" style="left:1450.1000000000001px;top:790.0px;width:1.2px;height:25.8px;background:#2a2a2a;"></div>
<div class="b" style="left:1451.3px;top:790.0px;width:1px;height:25.8px;background:rgba(255,255,255,.28);"></div>
<div class="b" style="left:1550.1000000000001px;top:790.0px;width:1.2px;height:25.8px;background:#2a2a2a;"></div>
<div class="b" style="left:1551.3px;top:790.0px;width:1px;height:25.8px;background:rgba(255,255,255,.28);"></div>
<div class="b" style="left:1303.2px;top:788.8px;width:144.1px;height:27.0px;overflow:hidden;">
<div class="t" style="left:2.6px;top:9.200000000000045px;font-size:12px;line-height:12px;color:#ececec;letter-spacing:-0.604px;">Check</div></div>
<div class="b" style="left:1451.7px;top:788.8px;width:95.6px;height:27.0px;overflow:hidden;">
<div class="t" style="left:3.8px;top:9.200000000000045px;font-size:12px;line-height:12px;color:#ececec;letter-spacing:-0.134px;">Value [%]</div></div>
<div class="b" style="left:1551.7px;top:788.8px;width:45.1px;height:27.0px;overflow:hidden;">
<div class="t" style="left:3.8px;top:9.200000000000045px;font-size:12px;line-height:12px;color:#ececec;letter-spacing:-0.404px;">Status</div></div>
<div class="b" style="left:1450.5px;top:815.8px;width:1px;height:25px;background:#d6d6d6;"></div>
<div class="b" style="left:1550.5px;top:815.8px;width:1px;height:25px;background:#d6d6d6;"></div>
<div class="t" style="left:1305.80px;top:824px;font-size:12px;line-height:12px;color:#2e2e2e;letter-spacing:0.071px;">Capacity N-M-M</div>
<div class="t" style="left:1455.50px;top:824px;font-size:12px;line-height:12px;color:#2e2e2e;letter-spacing:-0.652px;">83.2</div>
<svg class="b" style="left:1566.45px;top:819.9999999999999px;" width="17.4" height="17.4" viewBox="0 0 17.4 17.4"><circle cx="8.7" cy="8.7" r="7.7" fill="#5fd35a"/><circle cx="8.7" cy="8.7" r="7.2" fill="none" stroke="#8fe688" stroke-width="0.9"/><path d="M4.799999999999999 9.1l2.9 3 5-6.4" fill="none" stroke="#fff" stroke-width="2.1" stroke-linecap="round" stroke-linejoin="round"/></svg>
<div class="b" style="left:1302.2px;top:840.3px;width:298.0px;height:1px;background:#d6d6d6;"></div>
<div class="b" style="left:1450.5px;top:840.8px;width:1px;height:25px;background:#d6d6d6;"></div>
<div class="b" style="left:1550.5px;top:840.8px;width:1px;height:25px;background:#d6d6d6;"></div>
<div class="t" style="left:1305.80px;top:849px;font-size:12px;line-height:12px;color:#2e2e2e;letter-spacing:-0.606px;">Shear</div>
<div class="t" style="left:1455.50px;top:849px;font-size:12px;line-height:12px;color:#2e2e2e;letter-spacing:-0.652px;">66.5</div>
<svg class="b" style="left:1566.45px;top:844.9999999999999px;" width="17.4" height="17.4" viewBox="0 0 17.4 17.4"><circle cx="8.7" cy="8.7" r="7.7" fill="#5fd35a"/><circle cx="8.7" cy="8.7" r="7.2" fill="none" stroke="#8fe688" stroke-width="0.9"/><path d="M4.799999999999999 9.1l2.9 3 5-6.4" fill="none" stroke="#fff" stroke-width="2.1" stroke-linecap="round" stroke-linejoin="round"/></svg>
<div class="b" style="left:1302.2px;top:865.3px;width:298.0px;height:1px;background:#d6d6d6;"></div>
<div class="b" style="left:1450.5px;top:865.8px;width:1px;height:25px;background:#d6d6d6;"></div>
<div class="b" style="left:1550.5px;top:865.8px;width:1px;height:25px;background:#d6d6d6;"></div>
<div class="t" style="left:1305.80px;top:874px;font-size:12px;line-height:12px;color:#2e2e2e;letter-spacing:0.057px;">Interaction</div>
<div class="t" style="left:1455.50px;top:874px;font-size:12px;line-height:12px;color:#2e2e2e;letter-spacing:-0.652px;">93.6</div>
<svg class="b" style="left:1566.45px;top:869.9999999999999px;" width="17.4" height="17.4" viewBox="0 0 17.4 17.4"><circle cx="8.7" cy="8.7" r="7.7" fill="#5fd35a"/><circle cx="8.7" cy="8.7" r="7.2" fill="none" stroke="#8fe688" stroke-width="0.9"/><path d="M4.799999999999999 9.1l2.9 3 5-6.4" fill="none" stroke="#fff" stroke-width="2.1" stroke-linecap="round" stroke-linejoin="round"/></svg>
<div class="b" style="left:1302.2px;top:890.3px;width:298.0px;height:1px;background:#d6d6d6;"></div>
<div class="b" style="left:1450.5px;top:890.8px;width:1px;height:25px;background:#d6d6d6;"></div>
<div class="b" style="left:1550.5px;top:890.8px;width:1px;height:25px;background:#d6d6d6;"></div>
<div class="t" style="left:1305.80px;top:899px;font-size:12px;line-height:12px;color:#2e2e2e;letter-spacing:-0.106px;">Stress Limitation</div>
<div class="t" style="left:1455.50px;top:899px;font-size:12px;line-height:12px;color:#2e2e2e;letter-spacing:-0.652px;">93.5</div>
<svg class="b" style="left:1566.45px;top:894.9999999999999px;" width="17.4" height="17.4" viewBox="0 0 17.4 17.4"><circle cx="8.7" cy="8.7" r="7.7" fill="#5fd35a"/><circle cx="8.7" cy="8.7" r="7.2" fill="none" stroke="#8fe688" stroke-width="0.9"/><path d="M4.799999999999999 9.1l2.9 3 5-6.4" fill="none" stroke="#fff" stroke-width="2.1" stroke-linecap="round" stroke-linejoin="round"/></svg>
<div class="b" style="left:1302.2px;top:915.3px;width:298.0px;height:1px;background:#d6d6d6;"></div>
<div class="b" style="left:1450.5px;top:915.8px;width:1px;height:25px;background:#d6d6d6;"></div>
<div class="b" style="left:1550.5px;top:915.8px;width:1px;height:25px;background:#d6d6d6;"></div>
<div class="t" style="left:1305.80px;top:924px;font-size:12px;line-height:12px;color:#2e2e2e;letter-spacing:-0.134px;">Crack Width</div>
<div class="t" style="left:1455.50px;top:924px;font-size:12px;line-height:12px;color:#2e2e2e;letter-spacing:-0.652px;">89.4</div>
<svg class="b" style="left:1566.45px;top:919.9999999999999px;" width="17.4" height="17.4" viewBox="0 0 17.4 17.4"><circle cx="8.7" cy="8.7" r="7.7" fill="#5fd35a"/><circle cx="8.7" cy="8.7" r="7.2" fill="none" stroke="#8fe688" stroke-width="0.9"/><path d="M4.799999999999999 9.1l2.9 3 5-6.4" fill="none" stroke="#fff" stroke-width="2.1" stroke-linecap="round" stroke-linejoin="round"/></svg>
<div class="t" style="left:1300.00px;top:949px;font-size:12px;line-height:12px;color:#2e2e2e;letter-spacing:-0.090px;">Deflection checks</div>
<div class="b" style="left:1300.5px;top:967.3px;width:311.19999999999993px;height:54.300000000000004px;background:#fff;border:1.7px solid #c6c6c6;"></div>
<div class="b" style="left:1302.2px;top:994.3px;width:2.6px;height:25.6px;background:linear-gradient(90deg,#8e8e8e,#d0d0d0);"></div>
<div class="b" style="left:1302.2px;top:968.5px;width:307.79999999999995px;height:25.8px;background:linear-gradient(180deg,#787878 0%,#6a6a6a 22%,#505050 40%,#161616 50%,#1a1a1a 68%,#3c3c3c 100%);"></div>
<div class="b" style="left:1370.1000000000001px;top:968.5px;width:1.2px;height:25.8px;background:#2a2a2a;"></div>
<div class="b" style="left:1371.3px;top:968.5px;width:1px;height:25.8px;background:rgba(255,255,255,.28);"></div>
<div class="b" style="left:1420.1000000000001px;top:968.5px;width:1.2px;height:25.8px;background:#2a2a2a;"></div>
<div class="b" style="left:1421.3px;top:968.5px;width:1px;height:25.8px;background:rgba(255,255,255,.28);"></div>
<div class="b" style="left:1499.7px;top:968.5px;width:1.2px;height:25.8px;background:#2a2a2a;"></div>
<div class="b" style="left:1500.8999999999999px;top:968.5px;width:1px;height:25.8px;background:rgba(255,255,255,.28);"></div>
<div class="b" style="left:1560.1000000000001px;top:968.5px;width:1.2px;height:25.8px;background:#2a2a2a;"></div>
<div class="b" style="left:1561.3px;top:968.5px;width:1px;height:25.8px;background:rgba(255,255,255,.28);"></div>
<div class="b" style="left:1303.2px;top:967.3px;width:64.1px;height:27.0px;overflow:hidden;">
<div class="t" style="left:2.6px;top:9.700000000000045px;font-size:12px;line-height:12px;color:#ececec;letter-spacing:0.182px;">Deflection</div></div>
<div class="b" style="left:1371.7px;top:967.3px;width:45.6px;height:27.0px;overflow:hidden;">
<div class="t" style="left:3.8px;top:9.700000000000045px;font-size:12px;line-height:12px;color:#ececec;letter-spacing:0.266px;">u [mm]</div></div>
<div class="b" style="left:1421.7px;top:967.3px;width:75.1999999999999px;height:27.0px;overflow:hidden;">
<div class="t" style="left:3.8px;top:9.700000000000045px;font-size:12px;line-height:12px;color:#ececec;letter-spacing:0.274px;">u lim (±) [mm]</div></div>
<div class="b" style="left:1501.3px;top:967.3px;width:56.00000000000009px;height:27.0px;overflow:hidden;">
<div class="t" style="left:3.8px;top:9.700000000000045px;font-size:12px;line-height:12px;color:#ececec;letter-spacing:-0.134px;">Value [%]</div></div>
<div class="b" style="left:1561.7px;top:967.3px;width:44.899999999999956px;height:27.0px;overflow:hidden;">
<div class="t" style="left:3.8px;top:9.700000000000045px;font-size:12px;line-height:12px;color:#ececec;letter-spacing:-0.404px;">Status</div></div>
<div class="b" style="left:1370.5px;top:994.3px;width:1px;height:25.6px;background:#d6d6d6;"></div>
<div class="b" style="left:1420.5px;top:994.3px;width:1px;height:25.6px;background:#d6d6d6;"></div>
<div class="b" style="left:1500.1px;top:994.3px;width:1px;height:25.6px;background:#d6d6d6;"></div>
<div class="b" style="left:1560.5px;top:994.3px;width:1px;height:25.6px;background:#d6d6d6;"></div>
<div class="t" style="left:1305.80px;top:1003px;font-size:12px;line-height:12px;color:#2e2e2e;letter-spacing:0.113px;">Total</div>
<div class="t" style="left:1375.50px;top:1003px;font-size:12px;line-height:12px;color:#2e2e2e;letter-spacing:-0.115px;">-11.6</div>
<div class="t" style="left:1425.50px;top:1003px;font-size:12px;line-height:12px;color:#2e2e2e;letter-spacing:-0.652px;">24.0</div>
<div class="t" style="left:1505.10px;top:1003px;font-size:12px;line-height:12px;color:#2e2e2e;letter-spacing:-0.652px;">48.2</div>
<svg class="b" style="left:1576.35px;top:998.4999999999999px;" width="17.4" height="17.4" viewBox="0 0 17.4 17.4"><circle cx="8.7" cy="8.7" r="7.7" fill="#5fd35a"/><circle cx="8.7" cy="8.7" r="7.2" fill="none" stroke="#8fe688" stroke-width="0.9"/><path d="M4.799999999999999 9.1l2.9 3 5-6.4" fill="none" stroke="#fff" stroke-width="2.1" stroke-linecap="round" stroke-linejoin="round"/></svg>
<div class="t" style="left:1300.00px;top:1033px;font-size:12px;line-height:12px;color:#2e2e2e;letter-spacing:0.022px;">Lateral stability</div>
<div class="b" style="left:1300.5px;top:1051.4px;width:311.19999999999993px;height:54.300000000000004px;background:#fff;border:1.7px solid #c6c6c6;"></div>
<div class="b" style="left:1302.2px;top:1078.4px;width:2.6px;height:25.6px;background:linear-gradient(90deg,#8e8e8e,#d0d0d0);"></div>
<div class="b" style="left:1302.2px;top:1052.6000000000001px;width:307.79999999999995px;height:25.8px;background:linear-gradient(180deg,#787878 0%,#6a6a6a 22%,#505050 40%,#161616 50%,#1a1a1a 68%,#3c3c3c 100%);"></div>
<div class="b" style="left:1439.7px;top:1052.6000000000001px;width:1.2px;height:25.8px;background:#2a2a2a;"></div>
<div class="b" style="left:1440.8999999999999px;top:1052.6000000000001px;width:1px;height:25.8px;background:rgba(255,255,255,.28);"></div>
<div class="b" style="left:1489.1000000000001px;top:1052.6000000000001px;width:1.2px;height:25.8px;background:#2a2a2a;"></div>
<div class="b" style="left:1490.3px;top:1052.6000000000001px;width:1px;height:25.8px;background:rgba(255,255,255,.28);"></div>
<div class="b" style="left:1560.4px;top:1052.6000000000001px;width:1.2px;height:25.8px;background:#2a2a2a;"></div>
<div class="b" style="left:1561.6px;top:1052.6000000000001px;width:1px;height:25.8px;background:rgba(255,255,255,.28);"></div>
<div class="b" style="left:1303.2px;top:1051.4px;width:133.6999999999999px;height:27.0px;overflow:hidden;">
<div class="t" style="left:2.6px;top:9.599999999999909px;font-size:12px;line-height:12px;color:#ececec;letter-spacing:0.057px;">Description</div></div>
<div class="b" style="left:1441.3px;top:1051.4px;width:45.00000000000009px;height:27.0px;overflow:hidden;">
<div class="t" style="left:3.8px;top:9.599999999999909px;font-size:12px;line-height:12px;color:#ececec;letter-spacing:0.407px;">h / b [-]</div></div>
<div class="b" style="left:1490.7px;top:1051.4px;width:66.89999999999995px;height:27.0px;overflow:hidden;">
<div class="t" style="left:5.2px;top:9.599999999999909px;font-size:12px;line-height:12px;color:#ececec;letter-spacing:0.270px;">Limit h / b [-]</div></div>
<div class="b" style="left:1562px;top:1051.4px;width:44.6px;height:27.0px;overflow:hidden;">
<div class="t" style="left:3.8px;top:9.599999999999909px;font-size:12px;line-height:12px;color:#ececec;letter-spacing:-0.404px;">Status</div></div>
<div class="b" style="left:1440.1px;top:1078.4px;width:1px;height:25.6px;background:#d6d6d6;"></div>
<div class="b" style="left:1489.5px;top:1078.4px;width:1px;height:25.6px;background:#d6d6d6;"></div>
<div class="b" style="left:1560.8px;top:1078.4px;width:1px;height:25.6px;background:#d6d6d6;"></div>
<div class="t" style="left:1305.80px;top:1087px;font-size:12px;line-height:12px;color:#2e2e2e;letter-spacing:0.022px;">Lateral stability</div>
<div class="t" style="left:1445.10px;top:1087px;font-size:12px;line-height:12px;color:#2e2e2e;letter-spacing:-0.652px;">1.33</div>
<div class="t" style="left:1494.50px;top:1087px;font-size:12px;line-height:12px;color:#2e2e2e;letter-spacing:-0.652px;">2.50</div>
<svg class="b" style="left:1576.5px;top:1082.6000000000001px;" width="17.4" height="17.4" viewBox="0 0 17.4 17.4"><circle cx="8.7" cy="8.7" r="7.7" fill="#5fd35a"/><circle cx="8.7" cy="8.7" r="7.2" fill="none" stroke="#8fe688" stroke-width="0.9"/><path d="M4.799999999999999 9.1l2.9 3 5-6.4" fill="none" stroke="#fff" stroke-width="2.1" stroke-linecap="round" stroke-linejoin="round"/></svg>
<div class="b" style="left:1290.2px;top:783.8px;width:333px;height:322px;border:4px solid #f80000;border-radius:9.5px;"></div>
</div>
</body></html>
